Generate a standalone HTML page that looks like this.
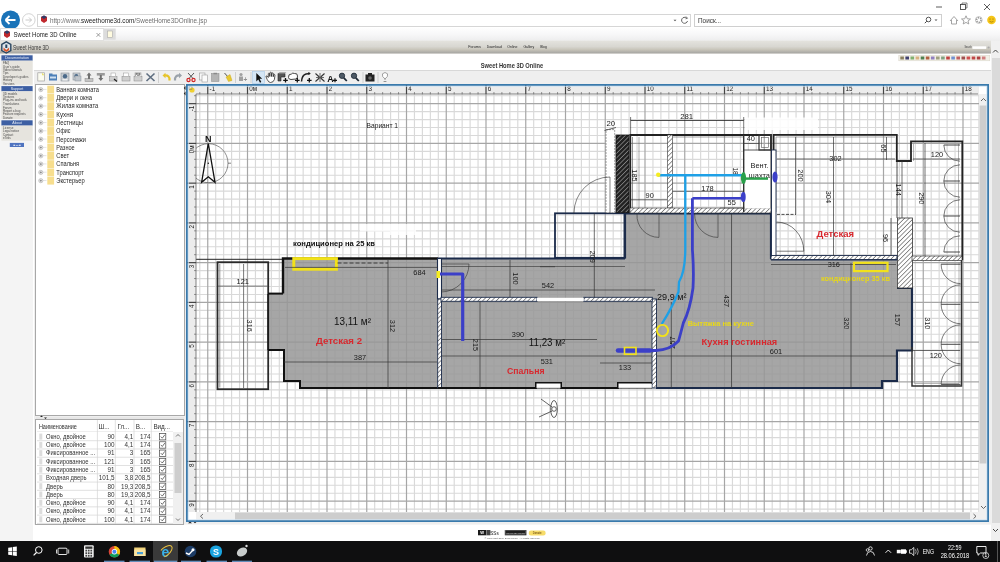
<!DOCTYPE html>
<html><head><meta charset="utf-8"><style>
*{margin:0;padding:0;box-sizing:border-box}
html,body{width:1000px;height:562px;overflow:hidden;background:#fff;font-family:"Liberation Sans",sans-serif;}
.a{position:absolute}
</style></head>
<body>
<svg class="a" style="left:0;top:0;will-change:transform" width="1000" height="562" viewBox="0 0 1000 562" font-family='"Liberation Sans", sans-serif'>
<rect x="37.5" y="14.5" width="653" height="12" fill="#fff" stroke="#d6d6d6" stroke-width="1" />
<circle cx="10.5" cy="20" r="9.5" fill="#1a73b8"/>
<path d="M5.5,20 L15.5,20 M5.5,20 L9.5,16 M5.5,20 L9.5,24" fill="none" stroke="#fff" stroke-width="1.8" />
<circle cx="28.8" cy="20" r="6.3" fill="#fff" stroke="#c8c8c8" stroke-width="0.8"/>
<path d="M25.5,20 L31.5,20 M29,17.5 L31.5,20 L29,22.5" fill="none" stroke="#bdbdbd" stroke-width="0.8" />
<polygon points="41,17 44,15.5 47,17 47,21 44,23 41,21" fill="#c0282d" stroke="none" stroke-width="1" />
<polygon points="41,17 44,15.5 47,17 44,19" fill="#2b3d6b" stroke="none" stroke-width="1" />
<text x="50" y="22.8" font-size="7.2" fill="#6d6d6d" textLength="157" lengthAdjust="spacingAndGlyphs">http://www.<tspan fill="#222">sweethome3d.com</tspan>/SweetHome3DOnline.jsp</text>
<path d="M673.5,19.8 L676.5,19.8 L675,21.3 Z" fill="#555" stroke="none" stroke-width="1" />
<path d="M686.5,18 A3,3 0 1 0 687.5,21" fill="none" stroke="#555" stroke-width="0.9" />
<path d="M686,16.5 L687.5,18.3 L685.5,18.8" fill="none" stroke="#555" stroke-width="0.8" />
<rect x="694.5" y="14.5" width="247" height="12" fill="#fff" stroke="#cfcfcf" stroke-width="1" />
<text x="698" y="22.8" font-size="7" fill="#333" font-weight="normal" text-anchor="start"  textLength="23" lengthAdjust="spacingAndGlyphs">Поиск...</text>
<circle cx="928.5" cy="19.5" r="2.3" fill="none" stroke="#444" stroke-width="0.9"/>
<line x1="926.8" y1="21.2" x2="924.8" y2="23.2" stroke="#444" stroke-width="1" />
<path d="M934.5,19.5 L937.5,19.5 L936,21 Z" fill="#555" stroke="none" stroke-width="1" />
<path d="M950,21 L954,16.5 L958,21 M951.5,20 L951.5,24 L956.5,24 L956.5,20" fill="none" stroke="#9a9a9a" stroke-width="0.9" />
<path d="M966,15.8 L967.3,18.8 L970.5,19 L968,21 L968.8,24 L966,22.4 L963.2,24 L964,21 L961.5,19 L964.7,18.8 Z" fill="none" stroke="#9a9a9a" stroke-width="0.9" />
<circle cx="978.8" cy="20" r="2.2" fill="none" stroke="#9a9a9a" stroke-width="1.6" stroke-dasharray="1.2 0.9"/>
<circle cx="978.8" cy="20" r="3.4" fill="none" stroke="#9a9a9a" stroke-width="0.6"/>
<circle cx="991.5" cy="20" r="4.3" fill="#f5c518"/>
<circle cx="990" cy="19" r="0.5" fill="#7a5a00"/><circle cx="993" cy="19" r="0.5" fill="#7a5a00"/>
<path d="M989.5,21.3 Q991.5,22.8 993.5,21.3" fill="none" stroke="#7a5a00" stroke-width="0.5" />
<line x1="936" y1="7" x2="942" y2="7" stroke="#333" stroke-width="0.8" />
<rect x="960.5" y="4.5" width="5" height="5" fill="none" stroke="#333" stroke-width="0.8" />
<path d="M962,4.5 L962,3 L967,3 L967,8 L965.5,8" fill="none" stroke="#333" stroke-width="0.6" />
<path d="M984,4 L990,10 M990,4 L984,10" fill="none" stroke="#333" stroke-width="0.8" />
<defs><linearGradient id="tg" x1="0" y1="0" x2="0" y2="1"><stop offset="0" stop-color="#fefefe"/><stop offset="0.5" stop-color="#f7f7f8"/><stop offset="1" stop-color="#ededed"/></linearGradient></defs>
<rect x="0" y="28" width="1000" height="13" fill="url(#tg)" stroke="none" stroke-width="1" />
<rect x="0.5" y="28.5" width="103" height="12" fill="#fff" stroke="#e0e0e0" stroke-width="1" />
<polygon points="4,32 7,30.5 10,32 10,36 7,38 4,36" fill="#c0282d" stroke="none" stroke-width="1" />
<polygon points="4,32 7,30.5 10,32 7,34" fill="#2b3d6b" stroke="none" stroke-width="1" />
<text x="13.6" y="37.3" font-size="7" fill="#222" font-weight="normal" text-anchor="start"  textLength="63" lengthAdjust="spacingAndGlyphs">Sweet Home 3D Online</text>
<path d="M96.5,33 L100.3,36.8 M100.3,33 L96.5,36.8" fill="none" stroke="#777" stroke-width="0.7" />
<rect x="104" y="28.5" width="11.7" height="11.2" fill="#dcdcdc" stroke="none" stroke-width="1" />
<rect x="107.5" y="31" width="5" height="6.5" fill="#fffbe0" stroke="#aaa" stroke-width="0.6" />
<defs><linearGradient id="hg" x1="0" y1="0" x2="0" y2="1"><stop offset="0" stop-color="#e4e3de"/><stop offset="0.45" stop-color="#d8d7d1"/><stop offset="0.68" stop-color="#c8c5ba"/><stop offset="0.93" stop-color="#aaa9a5"/><stop offset="1" stop-color="#bdbbb6"/></linearGradient></defs>
<rect x="0" y="40.7" width="991" height="13" fill="url(#hg)" stroke="none" stroke-width="1" />
<polygon points="1.8,44.3 6.3,41.8 10.8,44.3 10.8,50.5 6.3,53 1.8,50.5" fill="#dfe6ec" stroke="#2a4660" stroke-width="1.4" />
<polygon points="3.5,47.5 6.3,50 9.1,47.5 9.1,50.3 6.3,52 3.5,50.3" fill="#d8562a" stroke="none" stroke-width="1" />
<rect x="5.3" y="44.5" width="2" height="3.5" fill="#2a4660" stroke="none" stroke-width="1" />
<text x="13" y="49.6" font-size="6.6" fill="#3a3a3a" font-weight="normal" text-anchor="start"  textLength="35.8" lengthAdjust="spacingAndGlyphs">Sweet Home 3D</text>
<text x="468.2" y="48.3" font-size="3.6" fill="#222" font-weight="normal" text-anchor="start"  textLength="12.6" lengthAdjust="spacingAndGlyphs">Forums</text>
<text x="486.8" y="48.3" font-size="3.6" fill="#222" font-weight="normal" text-anchor="start"  textLength="15" lengthAdjust="spacingAndGlyphs">Download</text>
<text x="507.2" y="48.3" font-size="3.6" fill="#222" font-weight="normal" text-anchor="start"  textLength="10.2" lengthAdjust="spacingAndGlyphs">Online</text>
<text x="523.4" y="48.3" font-size="3.6" fill="#222" font-weight="normal" text-anchor="start"  textLength="10.8" lengthAdjust="spacingAndGlyphs">Gallery</text>
<text x="540.2" y="48.3" font-size="3.6" fill="#222" font-weight="normal" text-anchor="start"  textLength="6.6" lengthAdjust="spacingAndGlyphs">Blog</text>
<rect x="972.4" y="46.3" width="13.8" height="2.6" fill="#fff" stroke="none" stroke-width="1" />
<text x="964.6" y="48.3" font-size="2.6" fill="#333" font-weight="normal" text-anchor="start"  textLength="7.2" lengthAdjust="spacingAndGlyphs">Search</text>
<circle cx="988.6" cy="47.5" r="1.1" fill="#aaa"/>
<rect x="991" y="41" width="9" height="500" fill="#f0f0f0" stroke="none" stroke-width="1" />
<rect x="992" y="58" width="8" height="465" fill="#dadada" stroke="none" stroke-width="1" />
<path d="M993,52.5 L995.5,50 L998,52.5" fill="none" stroke="#444" stroke-width="1" />
<path d="M993,529 L995.5,531.5 L998,529" fill="none" stroke="#444" stroke-width="1" />
<rect x="0" y="54" width="33" height="487" fill="#f4f4f4" stroke="none" stroke-width="1" />
<rect x="1.4" y="55.3" width="31.2" height="5.400000000000006" fill="#3d5fa3" stroke="none" stroke-width="1" />
<text x="17" y="59.400000000000006" font-size="3.6" fill="#e8eef8" font-weight="normal" text-anchor="middle" >Documentation</text>
<rect x="1.4" y="60.7" width="31.2" height="24.0" fill="#e6e4de" stroke="none" stroke-width="1" />
<text x="3" y="64" font-size="3.0" fill="#4a4a4a" font-weight="normal" text-anchor="start" >FAQ</text>
<text x="3" y="67.9" font-size="3.0" fill="#4a4a4a" font-weight="normal" text-anchor="start" >User's guide</text>
<text x="3" y="70.6" font-size="3.0" fill="#4a4a4a" font-weight="normal" text-anchor="start" >Video tutorials</text>
<text x="3" y="74.1" font-size="3.0" fill="#4a4a4a" font-weight="normal" text-anchor="start" >Tips</text>
<text x="3" y="78" font-size="3.0" fill="#4a4a4a" font-weight="normal" text-anchor="start" >Developer's guides</text>
<text x="3" y="81.2" font-size="3.0" fill="#4a4a4a" font-weight="normal" text-anchor="start" >History</text>
<text x="3" y="84.5" font-size="3.0" fill="#4a4a4a" font-weight="normal" text-anchor="start" >Versions</text>
<rect x="1.4" y="86.1" width="31.2" height="5.200000000000003" fill="#3d5fa3" stroke="none" stroke-width="1" />
<text x="17" y="90.0" font-size="3.6" fill="#e8eef8" font-weight="normal" text-anchor="middle" >Support</text>
<rect x="1.4" y="91.3" width="31.2" height="27.700000000000003" fill="#e6e4de" stroke="none" stroke-width="1" />
<text x="3" y="94.6" font-size="3.0" fill="#4a4a4a" font-weight="normal" text-anchor="start" >3D models</text>
<text x="3" y="97.6" font-size="3.0" fill="#4a4a4a" font-weight="normal" text-anchor="start" >Textures</text>
<text x="3" y="101.4" font-size="3.0" fill="#4a4a4a" font-weight="normal" text-anchor="start" >Plug-ins and tools</text>
<text x="3" y="104.7" font-size="3.0" fill="#4a4a4a" font-weight="normal" text-anchor="start" >Translations</text>
<text x="3" y="108.5" font-size="3.0" fill="#4a4a4a" font-weight="normal" text-anchor="start" >Forum</text>
<text x="3" y="112" font-size="3.0" fill="#4a4a4a" font-weight="normal" text-anchor="start" >Report a bug</text>
<text x="3" y="115.4" font-size="3.0" fill="#4a4a4a" font-weight="normal" text-anchor="start" >Feature requests</text>
<text x="3" y="118.6" font-size="3.0" fill="#4a4a4a" font-weight="normal" text-anchor="start" >Donate</text>
<rect x="1.4" y="120.3" width="31.2" height="5.299999999999997" fill="#3d5fa3" stroke="none" stroke-width="1" />
<text x="17" y="124.3" font-size="3.6" fill="#e8eef8" font-weight="normal" text-anchor="middle" >About</text>
<rect x="1.4" y="125.6" width="31.2" height="15.099999999999994" fill="#e6e4de" stroke="none" stroke-width="1" />
<text x="3" y="128.8" font-size="3.0" fill="#4a4a4a" font-weight="normal" text-anchor="start" >License</text>
<text x="3" y="132.1" font-size="3.0" fill="#4a4a4a" font-weight="normal" text-anchor="start" >Legal notice</text>
<text x="3" y="135.7" font-size="3.0" fill="#4a4a4a" font-weight="normal" text-anchor="start" >Contact</text>
<text x="3" y="139" font-size="3.0" fill="#4a4a4a" font-weight="normal" text-anchor="start" >eTeks</text>
<rect x="9.8" y="142.9" width="14.2" height="4.1" fill="#4f74c0" stroke="none" stroke-width="1" />
<text x="17" y="146" font-size="2.4" fill="#fff" font-weight="normal" text-anchor="middle" >■ Tw ■</text>
<text x="512" y="68.3" font-size="6.9" fill="#333" font-weight="bold" text-anchor="middle"  textLength="62.4" lengthAdjust="spacingAndGlyphs">Sweet Home 3D Online</text>
<rect x="898.8" y="55.3" width="91" height="5.5" fill="#f2efe6" stroke="#d8d4c8" stroke-width="0.5" />
<rect x="900.3" y="56.5" width="3.6" height="3" fill="#8a8060" stroke="none" stroke-width="1" />
<rect x="905.4" y="56.5" width="3.6" height="3" fill="#404070" stroke="none" stroke-width="1" />
<rect x="910.5" y="56.5" width="3.6" height="3" fill="#80b070" stroke="none" stroke-width="1" />
<rect x="915.5999999999999" y="56.5" width="3.6" height="3" fill="#d8b080" stroke="none" stroke-width="1" />
<rect x="920.6999999999999" y="56.5" width="3.6" height="3" fill="#508050" stroke="none" stroke-width="1" />
<rect x="925.8" y="56.5" width="3.6" height="3" fill="#b06040" stroke="none" stroke-width="1" />
<rect x="930.9" y="56.5" width="3.6" height="3" fill="#9080c0" stroke="none" stroke-width="1" />
<rect x="936.0" y="56.5" width="3.6" height="3" fill="#a0a080" stroke="none" stroke-width="1" />
<rect x="941.0999999999999" y="56.5" width="3.6" height="3" fill="#80a080" stroke="none" stroke-width="1" />
<rect x="946.1999999999999" y="56.5" width="3.6" height="3" fill="#c04040" stroke="none" stroke-width="1" />
<rect x="951.3" y="56.5" width="3.6" height="3" fill="#7090d0" stroke="none" stroke-width="1" />
<rect x="956.4" y="56.5" width="3.6" height="3" fill="#c06060" stroke="none" stroke-width="1" />
<rect x="961.5" y="56.5" width="3.6" height="3" fill="#a05050" stroke="none" stroke-width="1" />
<rect x="966.5999999999999" y="56.5" width="3.6" height="3" fill="#d05050" stroke="none" stroke-width="1" />
<rect x="971.6999999999999" y="56.5" width="3.6" height="3" fill="#c04848" stroke="none" stroke-width="1" />
<rect x="976.8" y="56.5" width="3.6" height="3" fill="#b04040" stroke="none" stroke-width="1" />
<rect x="981.9" y="56.5" width="3.6" height="3" fill="#d08080" stroke="none" stroke-width="1" />
<rect x="34" y="70" width="957" height="454.6" fill="#efefef" stroke="none" stroke-width="1" />
<line x1="34" y1="70.5" x2="991" y2="70.5" stroke="#d8d8d8" stroke-width="1" />
<rect x="37.8" y="72.8" width="6.8" height="8.2" fill="#fbfbef" stroke="#a0a0a0" stroke-width="0.7" />
<polygon points="42,72.8 44.6,75.3 42,75.3" fill="#e8e070" stroke="none" stroke-width="1" />
<rect x="49" y="74.5" width="8" height="6" fill="#4d7fb8" stroke="none" stroke-width="1" />
<rect x="49" y="73.5" width="3.5" height="1.5" fill="#4d7fb8" stroke="none" stroke-width="1" />
<rect x="50" y="76.5" width="6" height="2" fill="#cfe0f0" stroke="none" stroke-width="1" />
<rect x="61" y="73" width="8" height="8" fill="#c8cdd2" stroke="#8a929a" stroke-width="0.6" />
<circle cx="65" cy="76.3" r="2.2" fill="#4b6a8a"/>
<rect x="62.5" y="79" width="5" height="1.5" fill="#eee" stroke="none" stroke-width="1" />
<rect x="73" y="73" width="7" height="7" fill="#c8cdd2" stroke="#8a929a" stroke-width="0.6" />
<circle cx="76.3" cy="76" r="2" fill="#4b6a8a"/>
<rect x="75" y="76" width="6" height="5" fill="#bfc5cb" stroke="#8a929a" stroke-width="0.5" />
<rect x="85" y="78.5" width="8" height="3" fill="#c4c4c4" stroke="#8a8a8a" stroke-width="0.5" />
<polygon points="89,72.5 91.5,75.5 90,75.5 90,79 88,79 88,75.5 86.5,75.5" fill="#707070" stroke="none" stroke-width="1" />
<rect x="96.8" y="73" width="8" height="2.6" fill="#9a9a9a" stroke="none" stroke-width="1" />
<polygon points="100.8,81 103.3,78 101.8,78 101.8,75 99.8,75 99.8,78 98.3,78" fill="#707070" stroke="none" stroke-width="1" />
<rect x="109.5" y="76.5" width="7.5" height="4.5" fill="#cfcfcf" stroke="#888" stroke-width="0.5" />
<rect x="111" y="73" width="4.5" height="3.5" fill="#fff" stroke="#999" stroke-width="0.5" />
<path d="M114,79 L117,81.5" fill="none" stroke="#222" stroke-width="1.2" />
<rect x="122" y="76.5" width="8" height="4.5" fill="#cfcfcf" stroke="#888" stroke-width="0.5" />
<rect x="123.5" y="73" width="5" height="3.5" fill="#fff" stroke="#999" stroke-width="0.5" />
<rect x="134" y="76.5" width="8" height="4.5" fill="#cfcfcf" stroke="#888" stroke-width="0.5" />
<rect x="135" y="72.8" width="6" height="4" fill="#fff" stroke="#999" stroke-width="0.5" />
<text x="138" y="76.3" font-size="2.6" fill="#333" font-weight="bold" text-anchor="middle" >PDF</text>
<path d="M146.5,73.5 L154.5,81 M154.5,73.5 L146.5,81" fill="none" stroke="#5f6e80" stroke-width="1.6" />
<line x1="158.5" y1="72" x2="158.5" y2="83" stroke="#c8c8c8" stroke-width="0.8" />
<path d="M169.5,80.5 Q170,75 164.5,75.5" fill="none" stroke="#e6c42a" stroke-width="2.2" />
<polygon points="162.5,75.5 165.5,72.8 165.5,78.2" fill="#e6c42a" stroke="none" stroke-width="1" />
<path d="M175,80.5 Q174.5,75 180,75.5" fill="none" stroke="#9aa2aa" stroke-width="2.2" />
<polygon points="182,75.5 179,72.8 179,78.2" fill="#9aa2aa" stroke="none" stroke-width="1" />
<path d="M188,73 L193.5,79 M194,73 L188.5,79" fill="none" stroke="#444" stroke-width="0.9" />
<circle cx="188.5" cy="80" r="1.6" fill="none" stroke="#d02828" stroke-width="1.2"/><circle cx="193.5" cy="80" r="1.6" fill="none" stroke="#d02828" stroke-width="1.2"/>
<rect x="199.5" y="73" width="5.5" height="7" fill="#f8f8f8" stroke="#9a9a9a" stroke-width="0.6" />
<rect x="202" y="75" width="5.5" height="7" fill="#fbfbfb" stroke="#9a9a9a" stroke-width="0.6" />
<rect x="211.5" y="73.5" width="7.5" height="8" fill="#b4b4b4" stroke="#8a8a8a" stroke-width="0.5" />
<rect x="213.5" y="72.8" width="3.5" height="1.5" fill="#8a8a8a" stroke="none" stroke-width="1" />
<path d="M224.5,73 L229,78" fill="none" stroke="#555" stroke-width="1" />
<polygon points="226,77 230,74.5 232,80.5 228.5,81.5" fill="#e8c830" stroke="#c0a010" stroke-width="0.4" />
<line x1="235.5" y1="72" x2="235.5" y2="83" stroke="#c8c8c8" stroke-width="0.8" />
<circle cx="241" cy="74.5" r="1.6" fill="#a0a0a0"/>
<rect x="239" y="76.5" width="4" height="4.5" fill="#a0a0a0" stroke="none" stroke-width="1" />
<text x="245.3" y="81.5" font-size="6.5" fill="#909090" font-weight="bold" text-anchor="middle" >+</text>
<line x1="251" y1="72" x2="251" y2="83" stroke="#c8c8c8" stroke-width="0.8" />
<rect x="252.5" y="71.5" width="12" height="12" fill="#d5e6f5" stroke="#a9c8e6" stroke-width="0.6" />
<polygon points="256.3,73 256.3,81.5 258.3,79.5 260,82.7 261.3,82 259.6,78.8 262.2,78.8" fill="#111" stroke="none" stroke-width="1" />
<path d="M267.2,79.5 L266,76.8 Q265.8,75.6 267,76 L268.3,77.5 L268.3,73.6 Q268.8,72.7 269.6,73.4 L269.8,76.5 L270,72.6 Q270.7,71.8 271.4,72.6 L271.5,76.5 L272,73.2 Q272.7,72.5 273.3,73.3 L273.2,76.8 L273.8,74.6 Q274.6,74.1 275,74.9 L274.4,79.5 Q273.5,82.5 270.5,82.5 Q268.5,82.5 267.2,79.5 Z" fill="#fff" stroke="#222" stroke-width="0.75" />
<polygon points="278,81 278,73.5 285,73.5 285,77 281,77 281,81" fill="#555" stroke="#222" stroke-width="0.6" />
<polygon points="278,73.5 279.5,72.3 286.3,72.3 285,73.5" fill="#999" stroke="none" stroke-width="1" />
<path d="M283.2,80.3 L287.8,80.3 M285.5,78.0 L285.5,82.6" fill="none" stroke="#111" stroke-width="1.3" />
<path d="M288.5,77.5 Q288,74 291.5,74 Q292.5,72.5 294.5,73.5 Q297.5,73 297.5,76 Q298,78.5 295.5,79 L291,79.5 Q288.8,79.5 288.5,77.5 Z" fill="#fff" stroke="#333" stroke-width="0.9" />
<path d="M295.0,80.3 L299.6,80.3 M297.3,78.0 L297.3,82.6" fill="none" stroke="#111" stroke-width="1.3" />
<path d="M301.5,81.5 Q302,75 306,74 L310,73.5" fill="none" stroke="#222" stroke-width="1.5" />
<polygon points="310.8,73.5 308.3,72 308.3,75" fill="#222" stroke="none" stroke-width="1" />
<path d="M307.0,80.3 L311.6,80.3 M309.3,78.0 L309.3,82.6" fill="none" stroke="#111" stroke-width="1.3" />
<path d="M315.5,73.5 L319.3,77 M324.5,73.5 L320.7,77 M315.5,81.5 L319.3,78 M324.5,81.5 L320.7,78" fill="none" stroke="#333" stroke-width="1.1" />
<path d="M316,77.5 L324,77.5 M320,73 L320,82" fill="none" stroke="#333" stroke-width="0.7" />
<text x="330.5" y="81.5" font-size="8.8" fill="#111" font-weight="bold" text-anchor="middle" >A</text>
<path d="M333,80.3 L337,80.3 M335,78.3 L335,82.3" fill="none" stroke="#111" stroke-width="1.2" />
<circle cx="342" cy="75.8" r="2.7" fill="#4e5a66" stroke="#1e2a36" stroke-width="0.8"/>
<line x1="343.8" y1="77.8" x2="346.8" y2="81" stroke="#1e2a36" stroke-width="1.8" />
<circle cx="354" cy="75.8" r="2.7" fill="#4e5a66" stroke="#1e2a36" stroke-width="0.8"/>
<line x1="355.8" y1="77.8" x2="358.8" y2="81" stroke="#1e2a36" stroke-width="1.8" />
<line x1="363" y1="72" x2="363" y2="83" stroke="#c8c8c8" stroke-width="0.8" />
<rect x="365.5" y="74.5" width="9" height="7" fill="#222" stroke="none" stroke-width="1" />
<rect x="368" y="73" width="4" height="2" fill="#222" stroke="none" stroke-width="1" />
<circle cx="370" cy="78" r="1.8" fill="#666"/>
<line x1="378" y1="72" x2="378" y2="83" stroke="#c8c8c8" stroke-width="0.8" />
<path d="M385,80 L385,79 Q381.5,76.5 382.5,73.8 Q385,71.2 387.5,73.8 Q388.5,76.5 385,79" fill="#fff" stroke="#888" stroke-width="0.8" />
<line x1="383.6" y1="81.5" x2="386.4" y2="81.5" stroke="#888" stroke-width="0.9" />
<rect x="35.5" y="84.5" width="149" height="331" fill="#fff" stroke="#a8a8a8" stroke-width="1" />
<circle cx="40.8" cy="89.6" r="2.1" fill="#f0f0f0" stroke="#9a9a9a" stroke-width="0.5"/>
<line x1="39.7" y1="89.6" x2="41.9" y2="89.6" stroke="#555" stroke-width="0.5" />
<line x1="40.8" y1="88.5" x2="40.8" y2="90.69999999999999" stroke="#555" stroke-width="0.5" />
<line x1="43" y1="89.39999999999999" x2="46.5" y2="89.39999999999999" stroke="#c8c8c8" stroke-width="0.5" />
<rect x="47.3" y="85.69999999999999" width="6.8" height="7.8" fill="#f7de8e" stroke="none" stroke-width="1" />
<text x="56.3" y="91.89999999999999" font-size="6.6" fill="#2a2a2a" font-weight="normal" text-anchor="start"  textLength="42.7" lengthAdjust="spacingAndGlyphs">Ванная комната</text>
<circle cx="40.8" cy="97.88" r="2.1" fill="#f0f0f0" stroke="#9a9a9a" stroke-width="0.5"/>
<line x1="39.7" y1="97.88" x2="41.9" y2="97.88" stroke="#555" stroke-width="0.5" />
<line x1="40.8" y1="96.78" x2="40.8" y2="98.97999999999999" stroke="#555" stroke-width="0.5" />
<line x1="43" y1="97.67999999999999" x2="46.5" y2="97.67999999999999" stroke="#c8c8c8" stroke-width="0.5" />
<rect x="47.3" y="93.97999999999999" width="6.8" height="7.8" fill="#f7de8e" stroke="none" stroke-width="1" />
<text x="56.3" y="100.17999999999999" font-size="6.6" fill="#2a2a2a" font-weight="normal" text-anchor="start"  textLength="35.7" lengthAdjust="spacingAndGlyphs">Двери и окна</text>
<circle cx="40.8" cy="106.16" r="2.1" fill="#f0f0f0" stroke="#9a9a9a" stroke-width="0.5"/>
<line x1="39.7" y1="106.16" x2="41.9" y2="106.16" stroke="#555" stroke-width="0.5" />
<line x1="40.8" y1="105.06" x2="40.8" y2="107.25999999999999" stroke="#555" stroke-width="0.5" />
<line x1="43" y1="105.96" x2="46.5" y2="105.96" stroke="#c8c8c8" stroke-width="0.5" />
<rect x="47.3" y="102.25999999999999" width="6.8" height="7.8" fill="#f7de8e" stroke="none" stroke-width="1" />
<text x="56.3" y="108.46" font-size="6.6" fill="#2a2a2a" font-weight="normal" text-anchor="start"  textLength="41.9" lengthAdjust="spacingAndGlyphs">Жилая комната</text>
<circle cx="40.8" cy="114.44" r="2.1" fill="#f0f0f0" stroke="#9a9a9a" stroke-width="0.5"/>
<line x1="39.7" y1="114.44" x2="41.9" y2="114.44" stroke="#555" stroke-width="0.5" />
<line x1="40.8" y1="113.34" x2="40.8" y2="115.53999999999999" stroke="#555" stroke-width="0.5" />
<line x1="43" y1="114.24" x2="46.5" y2="114.24" stroke="#c8c8c8" stroke-width="0.5" />
<rect x="47.3" y="110.53999999999999" width="6.8" height="7.8" fill="#f7de8e" stroke="none" stroke-width="1" />
<text x="56.3" y="116.74" font-size="6.6" fill="#2a2a2a" font-weight="normal" text-anchor="start"  textLength="16.8" lengthAdjust="spacingAndGlyphs">Кухня</text>
<circle cx="40.8" cy="122.72" r="2.1" fill="#f0f0f0" stroke="#9a9a9a" stroke-width="0.5"/>
<line x1="39.7" y1="122.72" x2="41.9" y2="122.72" stroke="#555" stroke-width="0.5" />
<line x1="40.8" y1="121.62" x2="40.8" y2="123.82" stroke="#555" stroke-width="0.5" />
<line x1="43" y1="122.52" x2="46.5" y2="122.52" stroke="#c8c8c8" stroke-width="0.5" />
<rect x="47.3" y="118.82" width="6.8" height="7.8" fill="#f7de8e" stroke="none" stroke-width="1" />
<text x="56.3" y="125.02" font-size="6.6" fill="#2a2a2a" font-weight="normal" text-anchor="start"  textLength="26.7" lengthAdjust="spacingAndGlyphs">Лестницы</text>
<circle cx="40.8" cy="131.0" r="2.1" fill="#f0f0f0" stroke="#9a9a9a" stroke-width="0.5"/>
<line x1="39.7" y1="131.0" x2="41.9" y2="131.0" stroke="#555" stroke-width="0.5" />
<line x1="40.8" y1="129.9" x2="40.8" y2="132.1" stroke="#555" stroke-width="0.5" />
<line x1="43" y1="130.8" x2="46.5" y2="130.8" stroke="#c8c8c8" stroke-width="0.5" />
<rect x="47.3" y="127.1" width="6.8" height="7.8" fill="#f7de8e" stroke="none" stroke-width="1" />
<text x="56.3" y="133.3" font-size="6.6" fill="#2a2a2a" font-weight="normal" text-anchor="start"  textLength="14.2" lengthAdjust="spacingAndGlyphs">Офис</text>
<circle cx="40.8" cy="139.27999999999997" r="2.1" fill="#f0f0f0" stroke="#9a9a9a" stroke-width="0.5"/>
<line x1="39.7" y1="139.27999999999997" x2="41.9" y2="139.27999999999997" stroke="#555" stroke-width="0.5" />
<line x1="40.8" y1="138.17999999999998" x2="40.8" y2="140.37999999999997" stroke="#555" stroke-width="0.5" />
<line x1="43" y1="139.07999999999998" x2="46.5" y2="139.07999999999998" stroke="#c8c8c8" stroke-width="0.5" />
<rect x="47.3" y="135.37999999999997" width="6.8" height="7.8" fill="#f7de8e" stroke="none" stroke-width="1" />
<text x="56.3" y="141.57999999999998" font-size="6.6" fill="#2a2a2a" font-weight="normal" text-anchor="start"  textLength="29.6" lengthAdjust="spacingAndGlyphs">Персонажи</text>
<circle cx="40.8" cy="147.56" r="2.1" fill="#f0f0f0" stroke="#9a9a9a" stroke-width="0.5"/>
<line x1="39.7" y1="147.56" x2="41.9" y2="147.56" stroke="#555" stroke-width="0.5" />
<line x1="40.8" y1="146.46" x2="40.8" y2="148.66" stroke="#555" stroke-width="0.5" />
<line x1="43" y1="147.36" x2="46.5" y2="147.36" stroke="#c8c8c8" stroke-width="0.5" />
<rect x="47.3" y="143.66" width="6.8" height="7.8" fill="#f7de8e" stroke="none" stroke-width="1" />
<text x="56.3" y="149.86" font-size="6.6" fill="#2a2a2a" font-weight="normal" text-anchor="start"  textLength="18.4" lengthAdjust="spacingAndGlyphs">Разное</text>
<circle cx="40.8" cy="155.83999999999997" r="2.1" fill="#f0f0f0" stroke="#9a9a9a" stroke-width="0.5"/>
<line x1="39.7" y1="155.83999999999997" x2="41.9" y2="155.83999999999997" stroke="#555" stroke-width="0.5" />
<line x1="40.8" y1="154.73999999999998" x2="40.8" y2="156.93999999999997" stroke="#555" stroke-width="0.5" />
<line x1="43" y1="155.64" x2="46.5" y2="155.64" stroke="#c8c8c8" stroke-width="0.5" />
<rect x="47.3" y="151.93999999999997" width="6.8" height="7.8" fill="#f7de8e" stroke="none" stroke-width="1" />
<text x="56.3" y="158.14" font-size="6.6" fill="#2a2a2a" font-weight="normal" text-anchor="start"  textLength="12.9" lengthAdjust="spacingAndGlyphs">Свет</text>
<circle cx="40.8" cy="164.12" r="2.1" fill="#f0f0f0" stroke="#9a9a9a" stroke-width="0.5"/>
<line x1="39.7" y1="164.12" x2="41.9" y2="164.12" stroke="#555" stroke-width="0.5" />
<line x1="40.8" y1="163.02" x2="40.8" y2="165.22" stroke="#555" stroke-width="0.5" />
<line x1="43" y1="163.92000000000002" x2="46.5" y2="163.92000000000002" stroke="#c8c8c8" stroke-width="0.5" />
<rect x="47.3" y="160.22" width="6.8" height="7.8" fill="#f7de8e" stroke="none" stroke-width="1" />
<text x="56.3" y="166.42000000000002" font-size="6.6" fill="#2a2a2a" font-weight="normal" text-anchor="start"  textLength="22.9" lengthAdjust="spacingAndGlyphs">Спальня</text>
<circle cx="40.8" cy="172.39999999999998" r="2.1" fill="#f0f0f0" stroke="#9a9a9a" stroke-width="0.5"/>
<line x1="39.7" y1="172.39999999999998" x2="41.9" y2="172.39999999999998" stroke="#555" stroke-width="0.5" />
<line x1="40.8" y1="171.29999999999998" x2="40.8" y2="173.49999999999997" stroke="#555" stroke-width="0.5" />
<line x1="43" y1="172.2" x2="46.5" y2="172.2" stroke="#c8c8c8" stroke-width="0.5" />
<rect x="47.3" y="168.49999999999997" width="6.8" height="7.8" fill="#f7de8e" stroke="none" stroke-width="1" />
<text x="56.3" y="174.7" font-size="6.6" fill="#2a2a2a" font-weight="normal" text-anchor="start"  textLength="27.6" lengthAdjust="spacingAndGlyphs">Транспорт</text>
<circle cx="40.8" cy="180.68" r="2.1" fill="#f0f0f0" stroke="#9a9a9a" stroke-width="0.5"/>
<line x1="39.7" y1="180.68" x2="41.9" y2="180.68" stroke="#555" stroke-width="0.5" />
<line x1="40.8" y1="179.58" x2="40.8" y2="181.78" stroke="#555" stroke-width="0.5" />
<line x1="43" y1="180.48000000000002" x2="46.5" y2="180.48000000000002" stroke="#c8c8c8" stroke-width="0.5" />
<rect x="47.3" y="176.78" width="6.8" height="7.8" fill="#f7de8e" stroke="none" stroke-width="1" />
<text x="56.3" y="182.98000000000002" font-size="6.6" fill="#2a2a2a" font-weight="normal" text-anchor="start"  textLength="28.4" lengthAdjust="spacingAndGlyphs">Экстерьер</text>
<line x1="36" y1="418" x2="184" y2="418" stroke="#ccc" stroke-width="0.5" />
<path d="M40,417 L41.5,415.5 L43,417 Z M44,417.5 L45.5,419 L47,417.5 Z" fill="#222" stroke="none" stroke-width="1" />
<rect x="35.5" y="419.5" width="148" height="105" fill="#fff" stroke="#a8a8a8" stroke-width="1" />
<rect x="37" y="420" width="136" height="12" fill="#fff" stroke="none" stroke-width="1" />
<line x1="37" y1="431.5" x2="173" y2="431.5" stroke="#e2e2e2" stroke-width="0.6" />
<line x1="97.4" y1="420" x2="97.4" y2="524" stroke="#d4d4d4" stroke-width="0.7" />
<line x1="115.3" y1="420" x2="115.3" y2="524" stroke="#d4d4d4" stroke-width="0.7" />
<line x1="134" y1="420" x2="134" y2="524" stroke="#d4d4d4" stroke-width="0.7" />
<line x1="151.3" y1="420" x2="151.3" y2="524" stroke="#d4d4d4" stroke-width="0.7" />
<text x="38.9" y="428.6" font-size="6.3" fill="#333" font-weight="normal" text-anchor="start"  textLength="38" lengthAdjust="spacingAndGlyphs">Наименование</text>
<text x="98.6" y="428.6" font-size="6.3" fill="#333" font-weight="normal" text-anchor="start" >Ш...</text>
<text x="117.4" y="428.6" font-size="6.3" fill="#333" font-weight="normal" text-anchor="start" >Гл...</text>
<text x="135.8" y="428.6" font-size="6.3" fill="#333" font-weight="normal" text-anchor="start" >В...</text>
<text x="153.4" y="428.6" font-size="6.3" fill="#333" font-weight="normal" text-anchor="start" >Вид...</text>
<line x1="37" y1="440.70000000000005" x2="173" y2="440.70000000000005" stroke="#d4d4d4" stroke-width="0.7" />
<rect x="39.3" y="433.6" width="3" height="6" fill="#dcdcdc" stroke="none" stroke-width="1" />
<text x="46.1" y="438.90000000000003" font-size="6.3" fill="#333" font-weight="normal" text-anchor="start"  textLength="39.8" lengthAdjust="spacingAndGlyphs">Окно, двойное</text>
<text x="114.6" y="438.90000000000003" font-size="6.3" fill="#333" font-weight="normal" text-anchor="end" >90</text>
<text x="133.3" y="438.90000000000003" font-size="6.3" fill="#333" font-weight="normal" text-anchor="end" >4,1</text>
<text x="150.6" y="438.90000000000003" font-size="6.3" fill="#333" font-weight="normal" text-anchor="end" >174</text>
<rect x="159.4" y="433.5" width="6.4" height="6.4" fill="#fff" stroke="#444" stroke-width="0.7" />
<path d="M160.8,436.6 L162.3,438.20000000000005 L164.8,434.8" fill="none" stroke="#333" stroke-width="0.7" />
<line x1="37" y1="448.97" x2="173" y2="448.97" stroke="#d4d4d4" stroke-width="0.7" />
<rect x="39.3" y="441.87" width="3" height="6" fill="#dcdcdc" stroke="none" stroke-width="1" />
<text x="46.1" y="447.17" font-size="6.3" fill="#333" font-weight="normal" text-anchor="start"  textLength="39.8" lengthAdjust="spacingAndGlyphs">Окно, двойное</text>
<text x="114.6" y="447.17" font-size="6.3" fill="#333" font-weight="normal" text-anchor="end" >100</text>
<text x="133.3" y="447.17" font-size="6.3" fill="#333" font-weight="normal" text-anchor="end" >4,1</text>
<text x="150.6" y="447.17" font-size="6.3" fill="#333" font-weight="normal" text-anchor="end" >174</text>
<rect x="159.4" y="441.77" width="6.4" height="6.4" fill="#fff" stroke="#444" stroke-width="0.7" />
<path d="M160.8,444.87 L162.3,446.47 L164.8,443.07" fill="none" stroke="#333" stroke-width="0.7" />
<line x1="37" y1="457.24000000000007" x2="173" y2="457.24000000000007" stroke="#d4d4d4" stroke-width="0.7" />
<rect x="39.3" y="450.14000000000004" width="3" height="6" fill="#dcdcdc" stroke="none" stroke-width="1" />
<text x="46.1" y="455.44000000000005" font-size="6.3" fill="#333" font-weight="normal" text-anchor="start"  textLength="49" lengthAdjust="spacingAndGlyphs">Фиксированное ...</text>
<text x="114.6" y="455.44000000000005" font-size="6.3" fill="#333" font-weight="normal" text-anchor="end" >91</text>
<text x="133.3" y="455.44000000000005" font-size="6.3" fill="#333" font-weight="normal" text-anchor="end" >3</text>
<text x="150.6" y="455.44000000000005" font-size="6.3" fill="#333" font-weight="normal" text-anchor="end" >165</text>
<rect x="159.4" y="450.04" width="6.4" height="6.4" fill="#fff" stroke="#444" stroke-width="0.7" />
<path d="M160.8,453.14000000000004 L162.3,454.74000000000007 L164.8,451.34000000000003" fill="none" stroke="#333" stroke-width="0.7" />
<line x1="37" y1="465.51000000000005" x2="173" y2="465.51000000000005" stroke="#d4d4d4" stroke-width="0.7" />
<rect x="39.3" y="458.41" width="3" height="6" fill="#dcdcdc" stroke="none" stroke-width="1" />
<text x="46.1" y="463.71000000000004" font-size="6.3" fill="#333" font-weight="normal" text-anchor="start"  textLength="49" lengthAdjust="spacingAndGlyphs">Фиксированное ...</text>
<text x="114.6" y="463.71000000000004" font-size="6.3" fill="#333" font-weight="normal" text-anchor="end" >121</text>
<text x="133.3" y="463.71000000000004" font-size="6.3" fill="#333" font-weight="normal" text-anchor="end" >3</text>
<text x="150.6" y="463.71000000000004" font-size="6.3" fill="#333" font-weight="normal" text-anchor="end" >165</text>
<rect x="159.4" y="458.31" width="6.4" height="6.4" fill="#fff" stroke="#444" stroke-width="0.7" />
<path d="M160.8,461.41 L162.3,463.01000000000005 L164.8,459.61" fill="none" stroke="#333" stroke-width="0.7" />
<line x1="37" y1="473.78000000000003" x2="173" y2="473.78000000000003" stroke="#d4d4d4" stroke-width="0.7" />
<rect x="39.3" y="466.68" width="3" height="6" fill="#dcdcdc" stroke="none" stroke-width="1" />
<text x="46.1" y="471.98" font-size="6.3" fill="#333" font-weight="normal" text-anchor="start"  textLength="49" lengthAdjust="spacingAndGlyphs">Фиксированное ...</text>
<text x="114.6" y="471.98" font-size="6.3" fill="#333" font-weight="normal" text-anchor="end" >91</text>
<text x="133.3" y="471.98" font-size="6.3" fill="#333" font-weight="normal" text-anchor="end" >3</text>
<text x="150.6" y="471.98" font-size="6.3" fill="#333" font-weight="normal" text-anchor="end" >165</text>
<rect x="159.4" y="466.58" width="6.4" height="6.4" fill="#fff" stroke="#444" stroke-width="0.7" />
<path d="M160.8,469.68 L162.3,471.28000000000003 L164.8,467.88" fill="none" stroke="#333" stroke-width="0.7" />
<line x1="37" y1="482.05000000000007" x2="173" y2="482.05000000000007" stroke="#d4d4d4" stroke-width="0.7" />
<rect x="39.3" y="474.95000000000005" width="3" height="6" fill="#dcdcdc" stroke="none" stroke-width="1" />
<text x="46.1" y="480.25000000000006" font-size="6.3" fill="#333" font-weight="normal" text-anchor="start"  textLength="40.4" lengthAdjust="spacingAndGlyphs">Входная дверь</text>
<text x="114.6" y="480.25000000000006" font-size="6.3" fill="#333" font-weight="normal" text-anchor="end" >101,5</text>
<text x="133.3" y="480.25000000000006" font-size="6.3" fill="#333" font-weight="normal" text-anchor="end" >3,8</text>
<text x="150.6" y="480.25000000000006" font-size="6.3" fill="#333" font-weight="normal" text-anchor="end" >208,5</text>
<rect x="159.4" y="474.85" width="6.4" height="6.4" fill="#fff" stroke="#444" stroke-width="0.7" />
<path d="M160.8,477.95000000000005 L162.3,479.55000000000007 L164.8,476.15000000000003" fill="none" stroke="#333" stroke-width="0.7" />
<line x1="37" y1="490.32000000000005" x2="173" y2="490.32000000000005" stroke="#d4d4d4" stroke-width="0.7" />
<rect x="39.3" y="483.22" width="3" height="6" fill="#dcdcdc" stroke="none" stroke-width="1" />
<text x="46.1" y="488.52000000000004" font-size="6.3" fill="#333" font-weight="normal" text-anchor="start"  textLength="16.7" lengthAdjust="spacingAndGlyphs">Дверь</text>
<text x="114.6" y="488.52000000000004" font-size="6.3" fill="#333" font-weight="normal" text-anchor="end" >80</text>
<text x="133.3" y="488.52000000000004" font-size="6.3" fill="#333" font-weight="normal" text-anchor="end" >19,3</text>
<text x="150.6" y="488.52000000000004" font-size="6.3" fill="#333" font-weight="normal" text-anchor="end" >208,5</text>
<rect x="159.4" y="483.12" width="6.4" height="6.4" fill="#fff" stroke="#444" stroke-width="0.7" />
<path d="M160.8,486.22 L162.3,487.82000000000005 L164.8,484.42" fill="none" stroke="#333" stroke-width="0.7" />
<line x1="37" y1="498.59000000000003" x2="173" y2="498.59000000000003" stroke="#d4d4d4" stroke-width="0.7" />
<rect x="39.3" y="491.49" width="3" height="6" fill="#dcdcdc" stroke="none" stroke-width="1" />
<text x="46.1" y="496.79" font-size="6.3" fill="#333" font-weight="normal" text-anchor="start"  textLength="16.7" lengthAdjust="spacingAndGlyphs">Дверь</text>
<text x="114.6" y="496.79" font-size="6.3" fill="#333" font-weight="normal" text-anchor="end" >80</text>
<text x="133.3" y="496.79" font-size="6.3" fill="#333" font-weight="normal" text-anchor="end" >19,3</text>
<text x="150.6" y="496.79" font-size="6.3" fill="#333" font-weight="normal" text-anchor="end" >208,5</text>
<rect x="159.4" y="491.39" width="6.4" height="6.4" fill="#fff" stroke="#444" stroke-width="0.7" />
<path d="M160.8,494.49 L162.3,496.09000000000003 L164.8,492.69" fill="none" stroke="#333" stroke-width="0.7" />
<line x1="37" y1="506.86" x2="173" y2="506.86" stroke="#d4d4d4" stroke-width="0.7" />
<rect x="39.3" y="499.76" width="3" height="6" fill="#dcdcdc" stroke="none" stroke-width="1" />
<text x="46.1" y="505.06" font-size="6.3" fill="#333" font-weight="normal" text-anchor="start"  textLength="39.8" lengthAdjust="spacingAndGlyphs">Окно, двойное</text>
<text x="114.6" y="505.06" font-size="6.3" fill="#333" font-weight="normal" text-anchor="end" >90</text>
<text x="133.3" y="505.06" font-size="6.3" fill="#333" font-weight="normal" text-anchor="end" >4,1</text>
<text x="150.6" y="505.06" font-size="6.3" fill="#333" font-weight="normal" text-anchor="end" >174</text>
<rect x="159.4" y="499.65999999999997" width="6.4" height="6.4" fill="#fff" stroke="#444" stroke-width="0.7" />
<path d="M160.8,502.76 L162.3,504.36 L164.8,500.96" fill="none" stroke="#333" stroke-width="0.7" />
<line x1="37" y1="515.13" x2="173" y2="515.13" stroke="#d4d4d4" stroke-width="0.7" />
<rect x="39.3" y="508.03000000000003" width="3" height="6" fill="#dcdcdc" stroke="none" stroke-width="1" />
<text x="46.1" y="513.33" font-size="6.3" fill="#333" font-weight="normal" text-anchor="start"  textLength="39.8" lengthAdjust="spacingAndGlyphs">Окно, двойное</text>
<text x="114.6" y="513.33" font-size="6.3" fill="#333" font-weight="normal" text-anchor="end" >90</text>
<text x="133.3" y="513.33" font-size="6.3" fill="#333" font-weight="normal" text-anchor="end" >4,1</text>
<text x="150.6" y="513.33" font-size="6.3" fill="#333" font-weight="normal" text-anchor="end" >174</text>
<rect x="159.4" y="507.93" width="6.4" height="6.4" fill="#fff" stroke="#444" stroke-width="0.7" />
<path d="M160.8,511.03000000000003 L162.3,512.63 L164.8,509.23" fill="none" stroke="#333" stroke-width="0.7" />
<line x1="37" y1="523.4" x2="173" y2="523.4" stroke="#d4d4d4" stroke-width="0.7" />
<rect x="39.3" y="516.3" width="3" height="6" fill="#dcdcdc" stroke="none" stroke-width="1" />
<text x="46.1" y="521.5999999999999" font-size="6.3" fill="#333" font-weight="normal" text-anchor="start"  textLength="39.8" lengthAdjust="spacingAndGlyphs">Окно, двойное</text>
<text x="114.6" y="521.5999999999999" font-size="6.3" fill="#333" font-weight="normal" text-anchor="end" >100</text>
<text x="133.3" y="521.5999999999999" font-size="6.3" fill="#333" font-weight="normal" text-anchor="end" >4,1</text>
<text x="150.6" y="521.5999999999999" font-size="6.3" fill="#333" font-weight="normal" text-anchor="end" >174</text>
<rect x="159.4" y="516.1999999999999" width="6.4" height="6.4" fill="#fff" stroke="#444" stroke-width="0.7" />
<path d="M160.8,519.3 L162.3,520.9 L164.8,517.5" fill="none" stroke="#333" stroke-width="0.7" />
<rect x="173" y="432" width="10" height="92" fill="#f0f0f0" stroke="none" stroke-width="1" />
<rect x="174.5" y="443" width="7" height="50" fill="#cdcdcd" stroke="none" stroke-width="1" />
<path d="M176,436.5 L178,434.5 L180,436.5" fill="none" stroke="#444" stroke-width="0.7" />
<path d="M176,518.5 L178,520.5 L180,518.5" fill="none" stroke="#444" stroke-width="0.7" />
<rect x="478" y="530" width="8.4" height="5.3" fill="#1a1a1a" stroke="none" stroke-width="1" />
<text x="482.2" y="534.3" font-size="4" fill="#fff" font-weight="bold" text-anchor="middle" >W</text>
<rect x="486.4" y="530" width="13.6" height="5.3" fill="#fff" stroke="none" stroke-width="1" />
<rect x="486.4" y="530" width="4" height="5.3" fill="#444" stroke="none" stroke-width="1" />
<text x="494.5" y="534.8" font-size="4.6" fill="#222" font-weight="normal" text-anchor="middle" >SSs</text>
<rect x="504.8" y="530" width="21.6" height="5.3" fill="#1e1e1e" stroke="none" stroke-width="1" />
<rect x="505.6" y="530.8" width="20" height="3.7" fill="none" stroke="#888" stroke-width="0.4" />
<text x="515.6" y="533.6" font-size="2.4" fill="#ccc" font-weight="normal" text-anchor="middle" >SOURCEFORGE</text>
<rect x="528.8" y="530.6" width="16.8" height="4.9" rx="2.2" fill="#f7dc6a"/>
<text x="537.2" y="534.1" font-size="2.7" fill="#553300" font-weight="normal" text-anchor="middle" >Donate</text>
<text x="512" y="538.8" font-size="2.3" fill="#555" font-weight="normal" text-anchor="middle"  textLength="55" lengthAdjust="spacingAndGlyphs">© Copyright 2006-2018 eTeks - All rights reserved</text>
<rect x="0" y="541" width="1000" height="21" fill="#0f0f10" stroke="none" stroke-width="1" />
<rect x="153" y="541" width="25" height="21" fill="#3a3a3a" stroke="none" stroke-width="1" />
<polygon points="8.2,547.8 12,547.2 12,550.9 8.2,550.9" fill="#fff" stroke="none" stroke-width="1" />
<polygon points="12.7,547.1 16.8,546.5 16.8,550.9 12.7,550.9" fill="#fff" stroke="none" stroke-width="1" />
<polygon points="8.2,551.6 12,551.6 12,555.3 8.2,554.8" fill="#fff" stroke="none" stroke-width="1" />
<polygon points="12.7,551.6 16.8,551.6 16.8,556 12.7,555.4" fill="#fff" stroke="none" stroke-width="1" />
<circle cx="38.8" cy="550" r="3.3" fill="none" stroke="#fff" stroke-width="1"/>
<line x1="36.5" y1="552.5" x2="33.6" y2="555.4" stroke="#fff" stroke-width="1.2" />
<rect x="58" y="548.2" width="9" height="6.3" rx="1" fill="none" stroke="#fff" stroke-width="0.9"/>
<line x1="56.5" y1="549.5" x2="56.5" y2="553.5" stroke="#fff" stroke-width="0.8" />
<line x1="68.7" y1="549.5" x2="68.7" y2="553.5" stroke="#fff" stroke-width="0.8" />
<rect x="84" y="545.2" width="9.7" height="12.3" rx="1" fill="#f4f4f4"/>
<rect x="85.3" y="546.5" width="7.1" height="2.3" fill="#333" stroke="none" stroke-width="1" />
<rect x="85.4" y="549.7" width="1.7" height="1.8" fill="#444" stroke="none" stroke-width="1" />
<rect x="87.9" y="549.7" width="1.7" height="1.8" fill="#444" stroke="none" stroke-width="1" />
<rect x="90.4" y="549.7" width="1.7" height="1.8" fill="#444" stroke="none" stroke-width="1" />
<rect x="85.4" y="552.3000000000001" width="1.7" height="1.8" fill="#444" stroke="none" stroke-width="1" />
<rect x="87.9" y="552.3000000000001" width="1.7" height="1.8" fill="#444" stroke="none" stroke-width="1" />
<rect x="90.4" y="552.3000000000001" width="1.7" height="1.8" fill="#444" stroke="none" stroke-width="1" />
<rect x="85.4" y="554.9000000000001" width="1.7" height="1.8" fill="#444" stroke="none" stroke-width="1" />
<rect x="87.9" y="554.9000000000001" width="1.7" height="1.8" fill="#444" stroke="none" stroke-width="1" />
<rect x="90.4" y="554.9000000000001" width="1.7" height="1.8" fill="#444" stroke="none" stroke-width="1" />
<circle cx="114.4" cy="551.8" r="5.7" fill="#db4437"/>
<path d="M114.4,551.8 L109.5,554.65 A5.7,5.7 0 0 0 119.3,554.65 Z" fill="#0f9d58" stroke="none" stroke-width="1" />
<path d="M114.4,551.8 L119.3,554.65 A5.7,5.7 0 0 0 114.4,546.1 Z" fill="#f4c20d" stroke="none" stroke-width="1" />
<circle cx="114.4" cy="551.8" r="2.7" fill="#fff"/><circle cx="114.4" cy="551.8" r="2" fill="#4285f4"/>
<line x1="104" y1="561.3" x2="124.5" y2="561.3" stroke="#6e9dd0" stroke-width="1.2" />
<rect x="134.2" y="547.5" width="11.3" height="8.5" fill="#f0d27a" stroke="none" stroke-width="1" />
<rect x="134.2" y="549.5" width="11.3" height="6.5" fill="#f9e3a0" stroke="none" stroke-width="1" />
<rect x="137" y="552" width="6" height="2.2" fill="#4aa0d8" stroke="none" stroke-width="1" />
<line x1="129.5" y1="561.3" x2="150" y2="561.3" stroke="#6e9dd0" stroke-width="1.2" />
<text x="165.5" y="557.2" font-size="14" fill="#38b0e8" font-weight="bold" text-anchor="middle" >e</text>
<ellipse cx="165.5" cy="551.5" rx="8" ry="4" fill="none" stroke="#e8c040" stroke-width="1" transform="rotate(-40 165.5 551.5)" stroke-dasharray="14 12"/>
<line x1="154" y1="561.3" x2="177" y2="561.3" stroke="#6e9dd0" stroke-width="1.2" />
<circle cx="190.5" cy="551.5" r="5.8" fill="#1d3c66"/>
<path d="M186,553 L189,554.5 L193,550" fill="none" stroke="#fff" stroke-width="1.4" />
<circle cx="193" cy="549.8" r="1.5" fill="#fff"/>
<line x1="181" y1="561.3" x2="201" y2="561.3" stroke="#6e9dd0" stroke-width="1.2" />
<rect x="210" y="545.5" width="12" height="12" rx="5.5" fill="#1aa4e0"/>
<text x="216" y="555" font-size="9" fill="#fff" font-weight="bold" text-anchor="middle" >S</text>
<line x1="206.5" y1="561.3" x2="227" y2="561.3" stroke="#6e9dd0" stroke-width="1.2" />
<ellipse cx="242" cy="552" rx="5.5" ry="4" fill="#c8cccc" transform="rotate(-30 242 552)"/>
<circle cx="246.5" cy="546" r="1.2" fill="#ddd"/>
<line x1="232" y1="561.3" x2="252" y2="561.3" stroke="#6e9dd0" stroke-width="1.2" />
<circle cx="870.5" cy="548.5" r="1.7" fill="none" stroke="#fff" stroke-width="0.8"/>
<path d="M866.5,555.5 Q867,551.5 870.5,551.5 Q874,551.5 874.5,555.5" fill="none" stroke="#fff" stroke-width="0.8" />
<circle cx="867.5" cy="550" r="1.3" fill="none" stroke="#fff" stroke-width="0.7"/>
<path d="M885.5,552.8 L888.3,550 L891.1,552.8" fill="none" stroke="#fff" stroke-width="0.9" />
<rect x="896.8" y="549.8" width="4" height="3.5" fill="#fff" stroke="none" stroke-width="1" />
<rect x="901" y="549.3" width="5" height="4.5" fill="#fff" stroke="none" stroke-width="1" />
<rect x="906" y="550.3" width="0.8" height="2.5" fill="#fff" stroke="none" stroke-width="1" />
<path d="M909.5,549.8 L911.3,549.8 L913.8,547.5 L913.8,555.5 L911.3,553.2 L909.5,553.2 Z" fill="none" stroke="#fff" stroke-width="0.8" />
<path d="M915.5,549.3 Q916.8,551.5 915.5,553.8 M917.3,548.3 Q919.2,551.5 917.3,554.8" fill="none" stroke="#fff" stroke-width="0.6" />
<text x="928.3" y="554" font-size="6.4" fill="#fff" font-weight="normal" text-anchor="middle"  textLength="11.3" lengthAdjust="spacingAndGlyphs">ENG</text>
<text x="954.8" y="549.5" font-size="6.4" fill="#fff" font-weight="normal" text-anchor="middle"  textLength="13.5" lengthAdjust="spacingAndGlyphs">22:59</text>
<text x="954.9" y="558.3" font-size="6.4" fill="#fff" font-weight="normal" text-anchor="middle"  textLength="28.5" lengthAdjust="spacingAndGlyphs">28.06.2018</text>
<path d="M976.8,546.5 L986,546.5 L986,553 L980.5,553 L978,555.3 L978,553 L976.8,553 Z" fill="none" stroke="#fff" stroke-width="0.9" />
<circle cx="985.8" cy="555.5" r="3" fill="#0f0f10" stroke="#fff" stroke-width="0.7"/>
<text x="985.8" y="557.4" font-size="4.6" fill="#fff" font-weight="bold" text-anchor="middle" >1</text>
<line x1="997.5" y1="541" x2="997.5" y2="562" stroke="#666" stroke-width="0.8" />
<rect x="187" y="85" width="801" height="436" fill="#fff" stroke="none" stroke-width="1" />
<clipPath id="vp"><rect x="196" y="94" width="783" height="418"/></clipPath>
<g clip-path="url(#vp)">
<line x1="199.8" y1="94" x2="199.8" y2="512" stroke="#d9d9d9" stroke-width="1.15" />
<line x1="215.7" y1="94" x2="215.7" y2="512" stroke="#d9d9d9" stroke-width="1.15" />
<line x1="223.65" y1="94" x2="223.65" y2="512" stroke="#d9d9d9" stroke-width="1.15" />
<line x1="231.6" y1="94" x2="231.6" y2="512" stroke="#d9d9d9" stroke-width="1.15" />
<line x1="239.55" y1="94" x2="239.55" y2="512" stroke="#d9d9d9" stroke-width="1.15" />
<line x1="255.45" y1="94" x2="255.45" y2="512" stroke="#d9d9d9" stroke-width="1.15" />
<line x1="263.4" y1="94" x2="263.4" y2="512" stroke="#d9d9d9" stroke-width="1.15" />
<line x1="271.35" y1="94" x2="271.35" y2="512" stroke="#d9d9d9" stroke-width="1.15" />
<line x1="279.3" y1="94" x2="279.3" y2="512" stroke="#d9d9d9" stroke-width="1.15" />
<line x1="295.2" y1="94" x2="295.2" y2="512" stroke="#d9d9d9" stroke-width="1.15" />
<line x1="303.15" y1="94" x2="303.15" y2="512" stroke="#d9d9d9" stroke-width="1.15" />
<line x1="311.1" y1="94" x2="311.1" y2="512" stroke="#d9d9d9" stroke-width="1.15" />
<line x1="319.05" y1="94" x2="319.05" y2="512" stroke="#d9d9d9" stroke-width="1.15" />
<line x1="334.95" y1="94" x2="334.95" y2="512" stroke="#d9d9d9" stroke-width="1.15" />
<line x1="342.9" y1="94" x2="342.9" y2="512" stroke="#d9d9d9" stroke-width="1.15" />
<line x1="350.85" y1="94" x2="350.85" y2="512" stroke="#d9d9d9" stroke-width="1.15" />
<line x1="358.8" y1="94" x2="358.8" y2="512" stroke="#d9d9d9" stroke-width="1.15" />
<line x1="374.7" y1="94" x2="374.7" y2="512" stroke="#d9d9d9" stroke-width="1.15" />
<line x1="382.65" y1="94" x2="382.65" y2="512" stroke="#d9d9d9" stroke-width="1.15" />
<line x1="390.6" y1="94" x2="390.6" y2="512" stroke="#d9d9d9" stroke-width="1.15" />
<line x1="398.55" y1="94" x2="398.55" y2="512" stroke="#d9d9d9" stroke-width="1.15" />
<line x1="414.45" y1="94" x2="414.45" y2="512" stroke="#d9d9d9" stroke-width="1.15" />
<line x1="422.4" y1="94" x2="422.4" y2="512" stroke="#d9d9d9" stroke-width="1.15" />
<line x1="430.35" y1="94" x2="430.35" y2="512" stroke="#d9d9d9" stroke-width="1.15" />
<line x1="438.3" y1="94" x2="438.3" y2="512" stroke="#d9d9d9" stroke-width="1.15" />
<line x1="454.2" y1="94" x2="454.2" y2="512" stroke="#d9d9d9" stroke-width="1.15" />
<line x1="462.15" y1="94" x2="462.15" y2="512" stroke="#d9d9d9" stroke-width="1.15" />
<line x1="470.1" y1="94" x2="470.1" y2="512" stroke="#d9d9d9" stroke-width="1.15" />
<line x1="478.05" y1="94" x2="478.05" y2="512" stroke="#d9d9d9" stroke-width="1.15" />
<line x1="493.95" y1="94" x2="493.95" y2="512" stroke="#d9d9d9" stroke-width="1.15" />
<line x1="501.9" y1="94" x2="501.9" y2="512" stroke="#d9d9d9" stroke-width="1.15" />
<line x1="509.85" y1="94" x2="509.85" y2="512" stroke="#d9d9d9" stroke-width="1.15" />
<line x1="517.8" y1="94" x2="517.8" y2="512" stroke="#d9d9d9" stroke-width="1.15" />
<line x1="533.7" y1="94" x2="533.7" y2="512" stroke="#d9d9d9" stroke-width="1.15" />
<line x1="541.65" y1="94" x2="541.65" y2="512" stroke="#d9d9d9" stroke-width="1.15" />
<line x1="549.6" y1="94" x2="549.6" y2="512" stroke="#d9d9d9" stroke-width="1.15" />
<line x1="557.55" y1="94" x2="557.55" y2="512" stroke="#d9d9d9" stroke-width="1.15" />
<line x1="573.45" y1="94" x2="573.45" y2="512" stroke="#d9d9d9" stroke-width="1.15" />
<line x1="581.4" y1="94" x2="581.4" y2="512" stroke="#d9d9d9" stroke-width="1.15" />
<line x1="589.35" y1="94" x2="589.35" y2="512" stroke="#d9d9d9" stroke-width="1.15" />
<line x1="597.3" y1="94" x2="597.3" y2="512" stroke="#d9d9d9" stroke-width="1.15" />
<line x1="613.2" y1="94" x2="613.2" y2="512" stroke="#d9d9d9" stroke-width="1.15" />
<line x1="621.15" y1="94" x2="621.15" y2="512" stroke="#d9d9d9" stroke-width="1.15" />
<line x1="629.1" y1="94" x2="629.1" y2="512" stroke="#d9d9d9" stroke-width="1.15" />
<line x1="637.05" y1="94" x2="637.05" y2="512" stroke="#d9d9d9" stroke-width="1.15" />
<line x1="652.95" y1="94" x2="652.95" y2="512" stroke="#d9d9d9" stroke-width="1.15" />
<line x1="660.9" y1="94" x2="660.9" y2="512" stroke="#d9d9d9" stroke-width="1.15" />
<line x1="668.85" y1="94" x2="668.85" y2="512" stroke="#d9d9d9" stroke-width="1.15" />
<line x1="676.8" y1="94" x2="676.8" y2="512" stroke="#d9d9d9" stroke-width="1.15" />
<line x1="692.7" y1="94" x2="692.7" y2="512" stroke="#d9d9d9" stroke-width="1.15" />
<line x1="700.65" y1="94" x2="700.65" y2="512" stroke="#d9d9d9" stroke-width="1.15" />
<line x1="708.6" y1="94" x2="708.6" y2="512" stroke="#d9d9d9" stroke-width="1.15" />
<line x1="716.55" y1="94" x2="716.55" y2="512" stroke="#d9d9d9" stroke-width="1.15" />
<line x1="732.45" y1="94" x2="732.45" y2="512" stroke="#d9d9d9" stroke-width="1.15" />
<line x1="740.4" y1="94" x2="740.4" y2="512" stroke="#d9d9d9" stroke-width="1.15" />
<line x1="748.35" y1="94" x2="748.35" y2="512" stroke="#d9d9d9" stroke-width="1.15" />
<line x1="756.3" y1="94" x2="756.3" y2="512" stroke="#d9d9d9" stroke-width="1.15" />
<line x1="772.2" y1="94" x2="772.2" y2="512" stroke="#d9d9d9" stroke-width="1.15" />
<line x1="780.15" y1="94" x2="780.15" y2="512" stroke="#d9d9d9" stroke-width="1.15" />
<line x1="788.1" y1="94" x2="788.1" y2="512" stroke="#d9d9d9" stroke-width="1.15" />
<line x1="796.05" y1="94" x2="796.05" y2="512" stroke="#d9d9d9" stroke-width="1.15" />
<line x1="811.95" y1="94" x2="811.95" y2="512" stroke="#d9d9d9" stroke-width="1.15" />
<line x1="819.9" y1="94" x2="819.9" y2="512" stroke="#d9d9d9" stroke-width="1.15" />
<line x1="827.85" y1="94" x2="827.85" y2="512" stroke="#d9d9d9" stroke-width="1.15" />
<line x1="835.8" y1="94" x2="835.8" y2="512" stroke="#d9d9d9" stroke-width="1.15" />
<line x1="851.7" y1="94" x2="851.7" y2="512" stroke="#d9d9d9" stroke-width="1.15" />
<line x1="859.65" y1="94" x2="859.65" y2="512" stroke="#d9d9d9" stroke-width="1.15" />
<line x1="867.6" y1="94" x2="867.6" y2="512" stroke="#d9d9d9" stroke-width="1.15" />
<line x1="875.55" y1="94" x2="875.55" y2="512" stroke="#d9d9d9" stroke-width="1.15" />
<line x1="891.45" y1="94" x2="891.45" y2="512" stroke="#d9d9d9" stroke-width="1.15" />
<line x1="899.4" y1="94" x2="899.4" y2="512" stroke="#d9d9d9" stroke-width="1.15" />
<line x1="907.35" y1="94" x2="907.35" y2="512" stroke="#d9d9d9" stroke-width="1.15" />
<line x1="915.3" y1="94" x2="915.3" y2="512" stroke="#d9d9d9" stroke-width="1.15" />
<line x1="931.2" y1="94" x2="931.2" y2="512" stroke="#d9d9d9" stroke-width="1.15" />
<line x1="939.15" y1="94" x2="939.15" y2="512" stroke="#d9d9d9" stroke-width="1.15" />
<line x1="947.1" y1="94" x2="947.1" y2="512" stroke="#d9d9d9" stroke-width="1.15" />
<line x1="955.05" y1="94" x2="955.05" y2="512" stroke="#d9d9d9" stroke-width="1.15" />
<line x1="970.95" y1="94" x2="970.95" y2="512" stroke="#d9d9d9" stroke-width="1.15" />
<line x1="978.9" y1="94" x2="978.9" y2="512" stroke="#d9d9d9" stroke-width="1.15" />
<line x1="196" y1="95.7" x2="979" y2="95.7" stroke="#d9d9d9" stroke-width="1.15" />
<line x1="196" y1="111.6" x2="979" y2="111.6" stroke="#d9d9d9" stroke-width="1.15" />
<line x1="196" y1="119.55" x2="979" y2="119.55" stroke="#d9d9d9" stroke-width="1.15" />
<line x1="196" y1="127.5" x2="979" y2="127.5" stroke="#d9d9d9" stroke-width="1.15" />
<line x1="196" y1="135.45" x2="979" y2="135.45" stroke="#d9d9d9" stroke-width="1.15" />
<line x1="196" y1="151.35" x2="979" y2="151.35" stroke="#d9d9d9" stroke-width="1.15" />
<line x1="196" y1="159.3" x2="979" y2="159.3" stroke="#d9d9d9" stroke-width="1.15" />
<line x1="196" y1="167.25" x2="979" y2="167.25" stroke="#d9d9d9" stroke-width="1.15" />
<line x1="196" y1="175.2" x2="979" y2="175.2" stroke="#d9d9d9" stroke-width="1.15" />
<line x1="196" y1="191.1" x2="979" y2="191.1" stroke="#d9d9d9" stroke-width="1.15" />
<line x1="196" y1="199.05" x2="979" y2="199.05" stroke="#d9d9d9" stroke-width="1.15" />
<line x1="196" y1="207.0" x2="979" y2="207.0" stroke="#d9d9d9" stroke-width="1.15" />
<line x1="196" y1="214.95" x2="979" y2="214.95" stroke="#d9d9d9" stroke-width="1.15" />
<line x1="196" y1="230.85" x2="979" y2="230.85" stroke="#d9d9d9" stroke-width="1.15" />
<line x1="196" y1="238.8" x2="979" y2="238.8" stroke="#d9d9d9" stroke-width="1.15" />
<line x1="196" y1="246.75" x2="979" y2="246.75" stroke="#d9d9d9" stroke-width="1.15" />
<line x1="196" y1="254.7" x2="979" y2="254.7" stroke="#d9d9d9" stroke-width="1.15" />
<line x1="196" y1="270.6" x2="979" y2="270.6" stroke="#d9d9d9" stroke-width="1.15" />
<line x1="196" y1="278.55" x2="979" y2="278.55" stroke="#d9d9d9" stroke-width="1.15" />
<line x1="196" y1="286.5" x2="979" y2="286.5" stroke="#d9d9d9" stroke-width="1.15" />
<line x1="196" y1="294.45" x2="979" y2="294.45" stroke="#d9d9d9" stroke-width="1.15" />
<line x1="196" y1="310.35" x2="979" y2="310.35" stroke="#d9d9d9" stroke-width="1.15" />
<line x1="196" y1="318.3" x2="979" y2="318.3" stroke="#d9d9d9" stroke-width="1.15" />
<line x1="196" y1="326.25" x2="979" y2="326.25" stroke="#d9d9d9" stroke-width="1.15" />
<line x1="196" y1="334.2" x2="979" y2="334.2" stroke="#d9d9d9" stroke-width="1.15" />
<line x1="196" y1="350.1" x2="979" y2="350.1" stroke="#d9d9d9" stroke-width="1.15" />
<line x1="196" y1="358.05" x2="979" y2="358.05" stroke="#d9d9d9" stroke-width="1.15" />
<line x1="196" y1="366.0" x2="979" y2="366.0" stroke="#d9d9d9" stroke-width="1.15" />
<line x1="196" y1="373.95" x2="979" y2="373.95" stroke="#d9d9d9" stroke-width="1.15" />
<line x1="196" y1="389.85" x2="979" y2="389.85" stroke="#d9d9d9" stroke-width="1.15" />
<line x1="196" y1="397.8" x2="979" y2="397.8" stroke="#d9d9d9" stroke-width="1.15" />
<line x1="196" y1="405.75" x2="979" y2="405.75" stroke="#d9d9d9" stroke-width="1.15" />
<line x1="196" y1="413.7" x2="979" y2="413.7" stroke="#d9d9d9" stroke-width="1.15" />
<line x1="196" y1="429.6" x2="979" y2="429.6" stroke="#d9d9d9" stroke-width="1.15" />
<line x1="196" y1="437.55" x2="979" y2="437.55" stroke="#d9d9d9" stroke-width="1.15" />
<line x1="196" y1="445.5" x2="979" y2="445.5" stroke="#d9d9d9" stroke-width="1.15" />
<line x1="196" y1="453.45" x2="979" y2="453.45" stroke="#d9d9d9" stroke-width="1.15" />
<line x1="196" y1="469.35" x2="979" y2="469.35" stroke="#d9d9d9" stroke-width="1.15" />
<line x1="196" y1="477.3" x2="979" y2="477.3" stroke="#d9d9d9" stroke-width="1.15" />
<line x1="196" y1="485.25" x2="979" y2="485.25" stroke="#d9d9d9" stroke-width="1.15" />
<line x1="196" y1="493.2" x2="979" y2="493.2" stroke="#d9d9d9" stroke-width="1.15" />
<line x1="196" y1="509.1" x2="979" y2="509.1" stroke="#d9d9d9" stroke-width="1.15" />
<line x1="207.75" y1="94" x2="207.75" y2="512" stroke="#a6a6a6" stroke-width="1.2" />
<line x1="247.5" y1="94" x2="247.5" y2="512" stroke="#a6a6a6" stroke-width="1.2" />
<line x1="287.25" y1="94" x2="287.25" y2="512" stroke="#a6a6a6" stroke-width="1.2" />
<line x1="327.0" y1="94" x2="327.0" y2="512" stroke="#a6a6a6" stroke-width="1.2" />
<line x1="366.75" y1="94" x2="366.75" y2="512" stroke="#a6a6a6" stroke-width="1.2" />
<line x1="406.5" y1="94" x2="406.5" y2="512" stroke="#a6a6a6" stroke-width="1.2" />
<line x1="446.25" y1="94" x2="446.25" y2="512" stroke="#a6a6a6" stroke-width="1.2" />
<line x1="486.0" y1="94" x2="486.0" y2="512" stroke="#a6a6a6" stroke-width="1.2" />
<line x1="525.75" y1="94" x2="525.75" y2="512" stroke="#a6a6a6" stroke-width="1.2" />
<line x1="565.5" y1="94" x2="565.5" y2="512" stroke="#a6a6a6" stroke-width="1.2" />
<line x1="605.25" y1="94" x2="605.25" y2="512" stroke="#a6a6a6" stroke-width="1.2" />
<line x1="645.0" y1="94" x2="645.0" y2="512" stroke="#a6a6a6" stroke-width="1.2" />
<line x1="684.75" y1="94" x2="684.75" y2="512" stroke="#a6a6a6" stroke-width="1.2" />
<line x1="724.5" y1="94" x2="724.5" y2="512" stroke="#a6a6a6" stroke-width="1.2" />
<line x1="764.25" y1="94" x2="764.25" y2="512" stroke="#a6a6a6" stroke-width="1.2" />
<line x1="804.0" y1="94" x2="804.0" y2="512" stroke="#a6a6a6" stroke-width="1.2" />
<line x1="843.75" y1="94" x2="843.75" y2="512" stroke="#a6a6a6" stroke-width="1.2" />
<line x1="883.5" y1="94" x2="883.5" y2="512" stroke="#a6a6a6" stroke-width="1.2" />
<line x1="923.25" y1="94" x2="923.25" y2="512" stroke="#a6a6a6" stroke-width="1.2" />
<line x1="963.0" y1="94" x2="963.0" y2="512" stroke="#a6a6a6" stroke-width="1.2" />
<line x1="196" y1="103.65" x2="979" y2="103.65" stroke="#a6a6a6" stroke-width="1.2" />
<line x1="196" y1="143.4" x2="979" y2="143.4" stroke="#a6a6a6" stroke-width="1.2" />
<line x1="196" y1="183.15" x2="979" y2="183.15" stroke="#a6a6a6" stroke-width="1.2" />
<line x1="196" y1="222.9" x2="979" y2="222.9" stroke="#a6a6a6" stroke-width="1.2" />
<line x1="196" y1="262.65" x2="979" y2="262.65" stroke="#a6a6a6" stroke-width="1.2" />
<line x1="196" y1="302.4" x2="979" y2="302.4" stroke="#a6a6a6" stroke-width="1.2" />
<line x1="196" y1="342.15" x2="979" y2="342.15" stroke="#a6a6a6" stroke-width="1.2" />
<line x1="196" y1="381.9" x2="979" y2="381.9" stroke="#a6a6a6" stroke-width="1.2" />
<line x1="196" y1="421.65" x2="979" y2="421.65" stroke="#a6a6a6" stroke-width="1.2" />
<line x1="196" y1="461.4" x2="979" y2="461.4" stroke="#a6a6a6" stroke-width="1.2" />
<line x1="196" y1="501.15" x2="979" y2="501.15" stroke="#a6a6a6" stroke-width="1.2" />
<defs><pattern id="hat" width="3.2" height="3.2" patternUnits="userSpaceOnUse" patternTransform="rotate(45)"><rect width="3.2" height="3.2" fill="#fff"/><line x1="0" y1="0" x2="0" y2="3.2" stroke="#2a2a2a" stroke-width="1"/></pattern><pattern id="hatb" width="3.2" height="3.2" patternUnits="userSpaceOnUse" patternTransform="rotate(45)"><rect width="3.2" height="3.2" fill="#222"/><line x1="0" y1="0" x2="0" y2="3.2" stroke="#fff" stroke-width="0.7"/></pattern></defs>
<polygon points="360,224 416,224 416,235 390,235 390,231.5 360,231.5" fill="rgba(255,255,255,0.8)" stroke="none" stroke-width="1" />
<rect x="745" y="117.5" width="73" height="12.5" fill="rgba(255,255,255,0.85)" stroke="none" stroke-width="1" />
<polygon points="283,258.5 625,258.5 625,213.5 771,213.5 771,259 897,259 897,288 912,288 912,350.5 897,350.5 897,381 882,381 882,388 652,388 652,383 618,383 618,388 561,388 561,383 536,383 536,388 300,388 300,381 284,381 284,350 268,350 268,293.6 283,293.6" fill="rgba(150,150,150,0.85)" stroke="none" stroke-width="1" />
<line x1="196" y1="259.3" x2="283" y2="259.3" stroke="#222" stroke-width="1" />
<rect x="217.5" y="262.2" width="50.7" height="127" fill="none" stroke="#2a2a2a" stroke-width="1.8" />
<line x1="219.8" y1="264" x2="219.8" y2="387.5" stroke="#777" stroke-width="0.8" />
<line x1="243.6" y1="264" x2="243.6" y2="388" stroke="#555" stroke-width="0.8" />
<line x1="218" y1="286.1" x2="268" y2="286.1" stroke="#555" stroke-width="0.8" />
<text x="242.7" y="284" font-size="7.4" fill="#1a1a1a" font-weight="normal" text-anchor="middle" >121</text>
<text font-size="7.4" fill="#1a1a1a" text-anchor="middle" transform="translate(246.5,325.7) rotate(90)">316</text>
<polyline points="283,293.6 283,258.5 438,258.5" fill="none" stroke="#111" stroke-width="2.4" />
<polyline points="268,293.6 283,293.6" fill="none" stroke="#111" stroke-width="2.0" />
<polyline points="268,294 268,350" fill="none" stroke="#111" stroke-width="1.2" />
<polyline points="268,350 284,350 284,381 300,381 300,388 438,388" fill="none" stroke="#111" stroke-width="2.0" />
<line x1="438" y1="258.5" x2="625" y2="258.5" stroke="#1b2b4a" stroke-width="2.2" />
<rect x="555" y="213.3" width="69.5" height="44.5" fill="none" stroke="#1b2b4a" stroke-width="1.8" />
<line x1="594.3" y1="213.3" x2="594.3" y2="300" stroke="#333" stroke-width="0.7" />
<text font-size="7.4" fill="#1a1a1a" text-anchor="middle" transform="translate(589.8,256.6) rotate(90)">209</text>
<line x1="540" y1="266.7" x2="555" y2="266.7" stroke="#333" stroke-width="0.7" />
<polyline points="625,258.5 625,213.3 771,213.3 771,259" fill="none" stroke="#1b2b4a" stroke-width="2.2" />
<polyline points="771,259.4 897,259.4" fill="none" stroke="#1b2b4a" stroke-width="2.2" />
<polyline points="897,288 912,288 912,350.5 897,350.5 897,381 882,381 882,388 656,388" fill="none" stroke="#1b2b4a" stroke-width="2.2" />
<rect x="897.5" y="218" width="15" height="70" fill="url(#hat)" stroke="#333" stroke-width="0.8" />
<rect x="437.5" y="258.5" width="4" height="40.5" fill="#fff" stroke="#1b2b4a" stroke-width="1.1" />
<rect x="437.7" y="299" width="3.8" height="89" fill="url(#hat)" stroke="#1b2b4a" stroke-width="0.9" />
<rect x="652" y="299" width="4.5" height="89" fill="url(#hat)" stroke="#1b2b4a" stroke-width="0.9" />
<rect x="441" y="297.3" width="96" height="4" fill="url(#hat)" stroke="#1b2b4a" stroke-width="0.9" />
<rect x="583.8" y="297.3" width="68.5" height="4" fill="url(#hat)" stroke="#1b2b4a" stroke-width="0.9" />
<rect x="537" y="297.8" width="46.8" height="3.2" fill="#fff" stroke="none" stroke-width="1" />
<polyline points="438,388 536,388 536,383 561,383 561,388 618,388 618,383 652,383" fill="none" stroke="#111" stroke-width="2.0" />
<rect x="536.5" y="383.5" width="24" height="4.5" fill="#fff" stroke="none" stroke-width="1" />
<rect x="618.5" y="383.5" width="33" height="4.5" fill="#fff" stroke="none" stroke-width="1" />
<line x1="536" y1="388.3" x2="561" y2="388.3" stroke="#333" stroke-width="0.8" />
<line x1="618" y1="388.3" x2="652" y2="388.3" stroke="#333" stroke-width="0.8" />
<rect x="606" y="129.6" width="8.7" height="83" fill="#fff" stroke="#888" stroke-width="0.8" stroke-dasharray="2 1"/>
<rect x="616" y="135" width="13" height="77.7" fill="url(#hatb)" stroke="#111" stroke-width="0.8" />
<polyline points="630.3,212 630.3,135 771,135 771,212.5" fill="none" stroke="#222" stroke-width="1.8" />
<line x1="632.5" y1="137" x2="632.5" y2="208" stroke="#666" stroke-width="0.7" />
<line x1="639" y1="137" x2="639" y2="208" stroke="#777" stroke-width="0.6" />
<rect x="667.5" y="135" width="4.9" height="73" fill="url(#hat)" stroke="#333" stroke-width="0.6" />
<rect x="630" y="208" width="141" height="5" fill="url(#hat)" stroke="#333" stroke-width="0.6" />
<line x1="672.5" y1="137" x2="743.7" y2="137" stroke="#666" stroke-width="0.6" />
<rect x="744.5" y="150.5" width="26" height="58" fill="#fff" stroke="none" stroke-width="1" />
<line x1="743.7" y1="135" x2="743.7" y2="212" stroke="#333" stroke-width="1.4" />
<rect x="759" y="135" width="12" height="15" fill="none" stroke="#333" stroke-width="1.2" />
<rect x="761.5" y="137.5" width="7" height="10" fill="none" stroke="#555" stroke-width="0.6" />
<line x1="743.7" y1="150" x2="771" y2="150" stroke="#333" stroke-width="0.8" />
<text x="759.4" y="168" font-size="7.4" fill="#1a1a1a" font-weight="normal" text-anchor="middle" >Вент.</text>
<text x="759.4" y="178" font-size="7.4" fill="#1a1a1a" font-weight="normal" text-anchor="middle" >шахта</text>
<line x1="630.6" y1="120.5" x2="743.7" y2="120.5" stroke="#222" stroke-width="0.8" />
<line x1="630.6" y1="117" x2="630.6" y2="135" stroke="#222" stroke-width="0.6" />
<line x1="743.7" y1="117" x2="743.7" y2="135" stroke="#222" stroke-width="0.6" />
<text x="686.7" y="118.5" font-size="7.8" fill="#222" font-weight="normal" text-anchor="middle" >281</text>
<text x="610.8" y="126" font-size="7.8" fill="#1a1a1a" font-weight="normal" text-anchor="middle" >20</text>
<line x1="604.5" y1="130.5" x2="616" y2="127.5" stroke="#222" stroke-width="0.7" />
<text font-size="7.4" fill="#1a1a1a" text-anchor="middle" transform="translate(632,175.5) rotate(90)">185</text>
<line x1="630.5" y1="199.8" x2="667" y2="199.8" stroke="#333" stroke-width="0.7" />
<text x="649.7" y="197.5" font-size="7.4" fill="#1a1a1a" font-weight="normal" text-anchor="middle" >90</text>
<line x1="672.5" y1="191.3" x2="743" y2="191.3" stroke="#333" stroke-width="0.7" />
<text x="707.5" y="191" font-size="7.4" fill="#1a1a1a" font-weight="normal" text-anchor="middle" >178</text>
<text font-size="6.5" fill="#222" text-anchor="middle" transform="translate(733,171) rotate(90)">18</text>
<text x="750.8" y="140.8" font-size="7.4" fill="#1a1a1a" font-weight="normal" text-anchor="middle" >40</text>
<line x1="744" y1="143.5" x2="759" y2="143.5" stroke="#333" stroke-width="0.6" />
<text x="731.7" y="205" font-size="7.4" fill="#1a1a1a" font-weight="normal" text-anchor="middle" >55</text>
<line x1="720" y1="208" x2="743" y2="208" stroke="#333" stroke-width="0.6" />
<polyline points="773.6,212.5 773.6,134.8 896.8,134.8 896.8,161 911,161 911,141.3 962.3,141.3 962.3,260" fill="none" stroke="#222" stroke-width="1.8" />
<line x1="776" y1="137" x2="776" y2="212" stroke="#777" stroke-width="0.6" />
<line x1="776" y1="137" x2="895" y2="137" stroke="#777" stroke-width="0.6" />
<rect x="771.5" y="150" width="4.5" height="107" fill="#fff" stroke="#1b2b4a" stroke-width="0.9" />
<rect x="771" y="255.5" width="126" height="4" fill="url(#hat)" stroke="#1b2b4a" stroke-width="0.9" />
<rect x="912" y="256" width="50" height="4.5" fill="url(#hat)" stroke="#333" stroke-width="0.7" />
<line x1="897" y1="161" x2="897" y2="218" stroke="#222" stroke-width="0.8" />
<polyline points="912,347 912,386 961.5,386 961.5,260" fill="none" stroke="#333" stroke-width="1.5" />
<line x1="914.5" y1="350" x2="914.5" y2="383.5" stroke="#888" stroke-width="0.6" />
<line x1="914.5" y1="383.5" x2="959" y2="383.5" stroke="#888" stroke-width="0.6" />
<line x1="959" y1="262" x2="959" y2="383.5" stroke="#888" stroke-width="0.6" />
<line x1="958.5" y1="143.5" x2="958.5" y2="256" stroke="#888" stroke-width="0.6" />
<line x1="913.5" y1="143.5" x2="913.5" y2="161" stroke="#888" stroke-width="0.6" />
<path d="M943.8,145 A16.2,16.2 0 0 0 960,161.2" fill="none" stroke="#333" stroke-width="0.65" />
<line x1="943.8" y1="145" x2="960" y2="145" stroke="#333" stroke-width="0.9" />
<path d="M960,164.8 A16.2,16.2 0 0 0 943.8,181 A16.2,16.2 0 0 0 960,197.2" fill="none" stroke="#333" stroke-width="0.65" />
<line x1="943.8" y1="181" x2="960" y2="181" stroke="#333" stroke-width="0.9" />
<path d="M960,199.8 A16.2,16.2 0 0 0 943.8,216 A16.2,16.2 0 0 0 960,232.2" fill="none" stroke="#333" stroke-width="0.65" />
<line x1="943.8" y1="216" x2="960" y2="216" stroke="#333" stroke-width="0.9" />
<path d="M960,235.8 A16.2,16.2 0 0 0 943.8,252 " fill="none" stroke="#333" stroke-width="0.65" />
<line x1="943.8" y1="252" x2="960" y2="252" stroke="#333" stroke-width="0.9" />
<path d="M941.1,264.2 A19.4,19.4 0 0 0 960.5,283.59999999999997" fill="none" stroke="#333" stroke-width="0.65" />
<line x1="941.1" y1="264.2" x2="960.5" y2="264.2" stroke="#333" stroke-width="0.9" />
<path d="M960.5,284.90000000000003 A19.4,19.4 0 0 0 941.1,304.3 A19.4,19.4 0 0 0 960.5,323.7" fill="none" stroke="#333" stroke-width="0.65" />
<line x1="941.1" y1="304.3" x2="960.5" y2="304.3" stroke="#333" stroke-width="0.9" />
<path d="M960.5,324.90000000000003 A19.4,19.4 0 0 0 941.1,344.3 A19.4,19.4 0 0 0 960.5,363.7" fill="none" stroke="#333" stroke-width="0.65" />
<line x1="941.1" y1="344.3" x2="960.5" y2="344.3" stroke="#333" stroke-width="0.9" />
<path d="M960.5,365.0 A19.4,19.4 0 0 0 941.1,384.4 " fill="none" stroke="#333" stroke-width="0.65" />
<line x1="941.1" y1="384.4" x2="960.5" y2="384.4" stroke="#333" stroke-width="0.9" />
<line x1="777" y1="159" x2="895" y2="159" stroke="#333" stroke-width="0.7" />
<text x="835.5" y="161" font-size="7.4" fill="#1a1a1a" font-weight="normal" text-anchor="middle" >302</text>
<line x1="795.6" y1="137" x2="795.6" y2="214.4" stroke="#333" stroke-width="0.7" />
<text font-size="7.4" fill="#1a1a1a" text-anchor="middle" transform="translate(798,175.5) rotate(90)">200</text>
<line x1="833.5" y1="137" x2="833.5" y2="256" stroke="#333" stroke-width="0.7" />
<text font-size="7.4" fill="#1a1a1a" text-anchor="middle" transform="translate(826.4,196.9) rotate(90)">304</text>
<line x1="886.5" y1="137" x2="886.5" y2="160" stroke="#333" stroke-width="0.7" />
<text font-size="7.4" fill="#1a1a1a" text-anchor="middle" transform="translate(880.5,148.4) rotate(90)">65</text>
<line x1="902" y1="161" x2="902" y2="218" stroke="#333" stroke-width="0.7" />
<text font-size="7.4" fill="#1a1a1a" text-anchor="middle" transform="translate(896,189.7) rotate(90)">144</text>
<line x1="925" y1="143" x2="925" y2="256" stroke="#333" stroke-width="0.7" />
<text font-size="7.4" fill="#1a1a1a" text-anchor="middle" transform="translate(919,198.3) rotate(90)">290</text>
<line x1="913" y1="159" x2="960" y2="159" stroke="#333" stroke-width="0.7" />
<text x="937" y="156.5" font-size="7.4" fill="#1a1a1a" font-weight="normal" text-anchor="middle" >120</text>
<line x1="891" y1="218" x2="891" y2="256" stroke="#333" stroke-width="0.7" />
<text font-size="7.4" fill="#1a1a1a" text-anchor="middle" transform="translate(883.4,238) rotate(90)">96</text>
<text x="835.3" y="237.3" font-size="9" fill="#d8282e" font-weight="bold" text-anchor="middle"  textLength="37.5" lengthAdjust="spacingAndGlyphs">Детская</text>
<path d="M776.5,222 A27.3,29.2 0 0 1 803.8,251.2" fill="none" stroke="#333" stroke-width="0.65" />
<line x1="776.5" y1="251.2" x2="803.8" y2="251.2" stroke="#333" stroke-width="0.65" />
<line x1="777" y1="214.4" x2="796" y2="214.4" stroke="#222" stroke-width="0.8" stroke-dasharray="3 1.5"/>
<line x1="771" y1="264.5" x2="896" y2="264.5" stroke="#333" stroke-width="0.7" />
<text x="833.8" y="267" font-size="7.4" fill="#1a1a1a" font-weight="normal" text-anchor="middle" >316</text>
<rect x="854" y="262.8" width="33.5" height="8.3" fill="none" stroke="#f2e21a" stroke-width="2.2" />
<text x="855.5" y="281" font-size="7.2" fill="#e8d81a" font-weight="bold" text-anchor="middle"  textLength="69" lengthAdjust="spacingAndGlyphs">кондиционер 35 кв</text>
<line x1="731.5" y1="214" x2="731.5" y2="388" stroke="#333" stroke-width="0.7" />
<text font-size="7.4" fill="#1a1a1a" text-anchor="middle" transform="translate(723.5,301) rotate(90)">437</text>
<line x1="851" y1="263" x2="851" y2="388" stroke="#333" stroke-width="0.7" />
<text font-size="7.4" fill="#1a1a1a" text-anchor="middle" transform="translate(843.5,323.3) rotate(90)">320</text>
<text font-size="7.4" fill="#1a1a1a" text-anchor="middle" transform="translate(894.7,320) rotate(90)">157</text>
<text font-size="7.4" fill="#1a1a1a" text-anchor="middle" transform="translate(925.3,323.3) rotate(90)">310</text>
<line x1="913" y1="350.5" x2="960" y2="350.5" stroke="#333" stroke-width="0.7" />
<text x="935.8" y="358" font-size="7.4" fill="#1a1a1a" font-weight="normal" text-anchor="middle" >120</text>
<line x1="657" y1="356" x2="896" y2="356" stroke="#333" stroke-width="0.7" />
<text x="776" y="354" font-size="7.4" fill="#1a1a1a" font-weight="normal" text-anchor="middle" >601</text>
<text x="739.4" y="344.8" font-size="8.8" fill="#d8282e" font-weight="bold" text-anchor="middle"  textLength="75.6" lengthAdjust="spacingAndGlyphs">Кухня гостинная</text>
<text x="720.8" y="325.6" font-size="6.8" fill="#e8d81a" font-weight="bold" text-anchor="middle"  textLength="66.3" lengthAdjust="spacingAndGlyphs">Вытяжка на кухне</text>
<text x="671.8" y="300" font-size="9.2" fill="#111" font-weight="normal" text-anchor="middle"  textLength="29.5" lengthAdjust="spacingAndGlyphs">29,9 м²</text>
<path d="M637,214 A22,22 0 0 0 659,237.4 L659,214" fill="none" stroke="#333" stroke-width="0.6" />
<path d="M694.6,214 A23.4,23.4 0 0 0 718,237.4 L718,214" fill="none" stroke="#333" stroke-width="0.6" />
<path d="M574,213 A36,36 0 0 1 610,177 L610,213" fill="none" stroke="#333" stroke-width="0.6" />
<text x="293" y="246" font-size="7.8" fill="#111" font-weight="bold" text-anchor="start"  textLength="82" lengthAdjust="spacingAndGlyphs">кондиционер на 25 кв</text>
<rect x="293.8" y="258.6" width="42.6" height="10.6" fill="none" stroke="#f2e21a" stroke-width="3" />
<line x1="337.5" y1="263" x2="388" y2="263" stroke="#222" stroke-width="0.8" stroke-dasharray="4 2"/>
<line x1="285" y1="267.4" x2="438" y2="267.4" stroke="#333" stroke-width="0.7" />
<text x="419.5" y="275" font-size="7.4" fill="#1a1a1a" font-weight="normal" text-anchor="middle" >684</text>
<text x="352.5" y="325" font-size="10" fill="#111" font-weight="normal" text-anchor="middle"  textLength="37" lengthAdjust="spacingAndGlyphs">13,11 м²</text>
<text x="339" y="344" font-size="8.8" fill="#d8282e" font-weight="bold" text-anchor="middle"  textLength="46" lengthAdjust="spacingAndGlyphs">Детская 2</text>
<line x1="284" y1="362" x2="437" y2="362" stroke="#333" stroke-width="0.7" />
<text x="360" y="360" font-size="7.4" fill="#1a1a1a" font-weight="normal" text-anchor="middle" >387</text>
<line x1="388" y1="260" x2="388" y2="388" stroke="#333" stroke-width="0.7" />
<text font-size="7.4" fill="#1a1a1a" text-anchor="middle" transform="translate(390,326) rotate(90)">312</text>
<line x1="441" y1="266.5" x2="625" y2="266.5" stroke="#333" stroke-width="0.6" />
<path d="M441,264 L469,264 A28,28 0 0 1 441,292" fill="none" stroke="#333" stroke-width="0.6" />
<line x1="441" y1="290" x2="655" y2="290" stroke="#333" stroke-width="0.7" />
<text x="548" y="288" font-size="7.4" fill="#1a1a1a" font-weight="normal" text-anchor="middle" >542</text>
<line x1="510" y1="260" x2="510" y2="297" stroke="#333" stroke-width="0.7" />
<text font-size="7.4" fill="#1a1a1a" text-anchor="middle" transform="translate(512.5,278.5) rotate(90)">100</text>
<line x1="442" y1="339.5" x2="597" y2="339.5" stroke="#333" stroke-width="0.7" />
<text x="518" y="337" font-size="7.4" fill="#1a1a1a" font-weight="normal" text-anchor="middle" >390</text>
<text x="547" y="345.5" font-size="10" fill="#111" font-weight="normal" text-anchor="middle"  textLength="36.3" lengthAdjust="spacingAndGlyphs">11,23 м²</text>
<line x1="442" y1="356" x2="652" y2="356" stroke="#333" stroke-width="0.7" />
<text x="546.8" y="363.5" font-size="7.4" fill="#1a1a1a" font-weight="normal" text-anchor="middle" >531</text>
<line x1="480" y1="301" x2="480" y2="388" stroke="#333" stroke-width="0.7" />
<text font-size="7.4" fill="#1a1a1a" text-anchor="middle" transform="translate(473,345) rotate(90)">215</text>
<line x1="600" y1="363" x2="652" y2="363" stroke="#333" stroke-width="0.7" />
<text x="625" y="369.5" font-size="7.4" fill="#1a1a1a" font-weight="normal" text-anchor="middle" >133</text>
<text x="525.7" y="374" font-size="8.8" fill="#d8282e" font-weight="bold" text-anchor="middle"  textLength="37.6" lengthAdjust="spacingAndGlyphs">Спальня</text>
<line x1="671.3" y1="302" x2="671.3" y2="388" stroke="#333" stroke-width="0.7" />
<text font-size="7.4" fill="#1a1a1a" text-anchor="middle" transform="translate(675,342.5) rotate(-90)">257</text>
<path d="M658,175.3 L743.7,175.3" fill="none" stroke="#1ea0e6" stroke-width="2.6" />
<path d="M685.3,175.3 L685.3,250 Q685,272 679,282 L678.5,292 Q672,308 661.7,324" fill="none" stroke="#1ea0e6" stroke-width="2.3" />
<path d="M692.4,198.3 L743.7,198.3" fill="none" stroke="#3b3fc8" stroke-width="2.6" />
<path d="M692.4,198.3 L692.4,250 Q694,270 693,288 Q690,310 683.3,323 Q680,336 678.5,341 Q670,350 656,350.5 L618,350.5" fill="none" stroke="#3b3fc8" stroke-width="2.8" />
<path d="M618,350.5 L650,350.5" fill="none" stroke="#3b3fc8" stroke-width="4.5" stroke-linecap="round"/>
<path d="M437,274 L462.7,274 L462.7,341" fill="none" stroke="#3b3fc8" stroke-width="3.2" stroke-linejoin="round"/>
<circle cx="658.2" cy="174.8" r="2.2" fill="#f5ec20"/>
<ellipse cx="743.5" cy="178" rx="2.6" ry="6" fill="#2aa04a"/>
<line x1="743.7" y1="178.6" x2="768" y2="178.6" stroke="#2aa04a" stroke-width="2.4" />
<ellipse cx="743.3" cy="197" rx="2.4" ry="5" fill="#3b3fc8"/>
<ellipse cx="775" cy="177" rx="2.6" ry="5.5" fill="#3b3fc8"/>
<rect x="436.5" y="271" width="3.5" height="7" fill="#f5ec20" stroke="none" stroke-width="1" />
<rect x="624.5" y="347.5" width="11.5" height="6.8" fill="none" stroke="#f2e21a" stroke-width="1.6" />
<circle cx="662.5" cy="330.5" r="5.6" fill="none" stroke="#f2e21a" stroke-width="1.9"/>
<circle cx="208.5" cy="163.2" r="19.5" fill="none" stroke="#444" stroke-width="0.6"/>
<polygon points="208.3,143.5 201.6,182.3 208.3,176.8 215,182.3" fill="none" stroke="#111" stroke-width="1.3" stroke-linejoin="miter"/>
<circle cx="208.3" cy="163.2" r="0.7" fill="#111"/>
<text x="208.3" y="141.8" font-size="9" fill="#111" font-weight="bold" text-anchor="middle" >N</text>
<line x1="228" y1="163.2" x2="231" y2="163.2" stroke="#333" stroke-width="0.6" />
<text x="382.3" y="127.5" font-size="7.5" fill="#222" font-weight="normal" text-anchor="middle"  textLength="31.4" lengthAdjust="spacingAndGlyphs">Вариант 1</text>
<ellipse cx="554" cy="409" rx="3.3" ry="8.5" fill="#fff" stroke="#222" stroke-width="0.7"/>
<circle cx="554" cy="409" r="2.3" fill="#fff" stroke="#222" stroke-width="0.7"/>
<line x1="541" y1="399" x2="552" y2="407" stroke="#222" stroke-width="0.7" />
<line x1="539" y1="417" x2="552" y2="411" stroke="#222" stroke-width="0.7" />
</g>
<rect x="187" y="85" width="792" height="9" fill="#ececec" stroke="none" stroke-width="1" />
<rect x="187" y="85" width="9" height="427" fill="#ececec" stroke="none" stroke-width="1" />
<line x1="196" y1="94" x2="978" y2="94" stroke="#666" stroke-width="0.8" />
<line x1="196" y1="94" x2="196" y2="512" stroke="#666" stroke-width="0.8" />
<line x1="199.8" y1="92" x2="199.8" y2="94" stroke="#555" stroke-width="0.6" />
<line x1="207.75" y1="85" x2="207.75" y2="94" stroke="#444" stroke-width="1.2" />
<text x="209.55" y="91.2" font-size="6.3" fill="#222" font-weight="normal" text-anchor="start" >-1</text>
<line x1="215.7" y1="92" x2="215.7" y2="94" stroke="#555" stroke-width="0.6" />
<line x1="223.65" y1="92" x2="223.65" y2="94" stroke="#555" stroke-width="0.6" />
<line x1="231.6" y1="92" x2="231.6" y2="94" stroke="#555" stroke-width="0.6" />
<line x1="239.55" y1="92" x2="239.55" y2="94" stroke="#555" stroke-width="0.6" />
<line x1="247.5" y1="85" x2="247.5" y2="94" stroke="#444" stroke-width="1.2" />
<text x="249.3" y="91.2" font-size="6.3" fill="#222" font-weight="normal" text-anchor="start" >0м</text>
<line x1="255.45" y1="92" x2="255.45" y2="94" stroke="#555" stroke-width="0.6" />
<line x1="263.4" y1="92" x2="263.4" y2="94" stroke="#555" stroke-width="0.6" />
<line x1="271.35" y1="92" x2="271.35" y2="94" stroke="#555" stroke-width="0.6" />
<line x1="279.3" y1="92" x2="279.3" y2="94" stroke="#555" stroke-width="0.6" />
<line x1="287.25" y1="85" x2="287.25" y2="94" stroke="#444" stroke-width="1.2" />
<text x="289.05" y="91.2" font-size="6.3" fill="#222" font-weight="normal" text-anchor="start" >1</text>
<line x1="295.2" y1="92" x2="295.2" y2="94" stroke="#555" stroke-width="0.6" />
<line x1="303.15" y1="92" x2="303.15" y2="94" stroke="#555" stroke-width="0.6" />
<line x1="311.1" y1="92" x2="311.1" y2="94" stroke="#555" stroke-width="0.6" />
<line x1="319.05" y1="92" x2="319.05" y2="94" stroke="#555" stroke-width="0.6" />
<line x1="327.0" y1="85" x2="327.0" y2="94" stroke="#444" stroke-width="1.2" />
<text x="328.8" y="91.2" font-size="6.3" fill="#222" font-weight="normal" text-anchor="start" >2</text>
<line x1="334.95" y1="92" x2="334.95" y2="94" stroke="#555" stroke-width="0.6" />
<line x1="342.9" y1="92" x2="342.9" y2="94" stroke="#555" stroke-width="0.6" />
<line x1="350.85" y1="92" x2="350.85" y2="94" stroke="#555" stroke-width="0.6" />
<line x1="358.8" y1="92" x2="358.8" y2="94" stroke="#555" stroke-width="0.6" />
<line x1="366.75" y1="85" x2="366.75" y2="94" stroke="#444" stroke-width="1.2" />
<text x="368.55" y="91.2" font-size="6.3" fill="#222" font-weight="normal" text-anchor="start" >3</text>
<line x1="374.7" y1="92" x2="374.7" y2="94" stroke="#555" stroke-width="0.6" />
<line x1="382.65" y1="92" x2="382.65" y2="94" stroke="#555" stroke-width="0.6" />
<line x1="390.6" y1="92" x2="390.6" y2="94" stroke="#555" stroke-width="0.6" />
<line x1="398.55" y1="92" x2="398.55" y2="94" stroke="#555" stroke-width="0.6" />
<line x1="406.5" y1="85" x2="406.5" y2="94" stroke="#444" stroke-width="1.2" />
<text x="408.3" y="91.2" font-size="6.3" fill="#222" font-weight="normal" text-anchor="start" >4</text>
<line x1="414.45" y1="92" x2="414.45" y2="94" stroke="#555" stroke-width="0.6" />
<line x1="422.4" y1="92" x2="422.4" y2="94" stroke="#555" stroke-width="0.6" />
<line x1="430.35" y1="92" x2="430.35" y2="94" stroke="#555" stroke-width="0.6" />
<line x1="438.3" y1="92" x2="438.3" y2="94" stroke="#555" stroke-width="0.6" />
<line x1="446.25" y1="85" x2="446.25" y2="94" stroke="#444" stroke-width="1.2" />
<text x="448.05" y="91.2" font-size="6.3" fill="#222" font-weight="normal" text-anchor="start" >5</text>
<line x1="454.2" y1="92" x2="454.2" y2="94" stroke="#555" stroke-width="0.6" />
<line x1="462.15" y1="92" x2="462.15" y2="94" stroke="#555" stroke-width="0.6" />
<line x1="470.1" y1="92" x2="470.1" y2="94" stroke="#555" stroke-width="0.6" />
<line x1="478.05" y1="92" x2="478.05" y2="94" stroke="#555" stroke-width="0.6" />
<line x1="486.0" y1="85" x2="486.0" y2="94" stroke="#444" stroke-width="1.2" />
<text x="487.8" y="91.2" font-size="6.3" fill="#222" font-weight="normal" text-anchor="start" >6</text>
<line x1="493.95" y1="92" x2="493.95" y2="94" stroke="#555" stroke-width="0.6" />
<line x1="501.9" y1="92" x2="501.9" y2="94" stroke="#555" stroke-width="0.6" />
<line x1="509.85" y1="92" x2="509.85" y2="94" stroke="#555" stroke-width="0.6" />
<line x1="517.8" y1="92" x2="517.8" y2="94" stroke="#555" stroke-width="0.6" />
<line x1="525.75" y1="85" x2="525.75" y2="94" stroke="#444" stroke-width="1.2" />
<text x="527.55" y="91.2" font-size="6.3" fill="#222" font-weight="normal" text-anchor="start" >7</text>
<line x1="533.7" y1="92" x2="533.7" y2="94" stroke="#555" stroke-width="0.6" />
<line x1="541.65" y1="92" x2="541.65" y2="94" stroke="#555" stroke-width="0.6" />
<line x1="549.6" y1="92" x2="549.6" y2="94" stroke="#555" stroke-width="0.6" />
<line x1="557.55" y1="92" x2="557.55" y2="94" stroke="#555" stroke-width="0.6" />
<line x1="565.5" y1="85" x2="565.5" y2="94" stroke="#444" stroke-width="1.2" />
<text x="567.3" y="91.2" font-size="6.3" fill="#222" font-weight="normal" text-anchor="start" >8</text>
<line x1="573.45" y1="92" x2="573.45" y2="94" stroke="#555" stroke-width="0.6" />
<line x1="581.4" y1="92" x2="581.4" y2="94" stroke="#555" stroke-width="0.6" />
<line x1="589.35" y1="92" x2="589.35" y2="94" stroke="#555" stroke-width="0.6" />
<line x1="597.3" y1="92" x2="597.3" y2="94" stroke="#555" stroke-width="0.6" />
<line x1="605.25" y1="85" x2="605.25" y2="94" stroke="#444" stroke-width="1.2" />
<text x="607.05" y="91.2" font-size="6.3" fill="#222" font-weight="normal" text-anchor="start" >9</text>
<line x1="613.2" y1="92" x2="613.2" y2="94" stroke="#555" stroke-width="0.6" />
<line x1="621.15" y1="92" x2="621.15" y2="94" stroke="#555" stroke-width="0.6" />
<line x1="629.1" y1="92" x2="629.1" y2="94" stroke="#555" stroke-width="0.6" />
<line x1="637.05" y1="92" x2="637.05" y2="94" stroke="#555" stroke-width="0.6" />
<line x1="645.0" y1="85" x2="645.0" y2="94" stroke="#444" stroke-width="1.2" />
<text x="646.8" y="91.2" font-size="6.3" fill="#222" font-weight="normal" text-anchor="start" >10</text>
<line x1="652.95" y1="92" x2="652.95" y2="94" stroke="#555" stroke-width="0.6" />
<line x1="660.9" y1="92" x2="660.9" y2="94" stroke="#555" stroke-width="0.6" />
<line x1="668.85" y1="92" x2="668.85" y2="94" stroke="#555" stroke-width="0.6" />
<line x1="676.8" y1="92" x2="676.8" y2="94" stroke="#555" stroke-width="0.6" />
<line x1="684.75" y1="85" x2="684.75" y2="94" stroke="#444" stroke-width="1.2" />
<text x="686.55" y="91.2" font-size="6.3" fill="#222" font-weight="normal" text-anchor="start" >11</text>
<line x1="692.7" y1="92" x2="692.7" y2="94" stroke="#555" stroke-width="0.6" />
<line x1="700.65" y1="92" x2="700.65" y2="94" stroke="#555" stroke-width="0.6" />
<line x1="708.6" y1="92" x2="708.6" y2="94" stroke="#555" stroke-width="0.6" />
<line x1="716.55" y1="92" x2="716.55" y2="94" stroke="#555" stroke-width="0.6" />
<line x1="724.5" y1="85" x2="724.5" y2="94" stroke="#444" stroke-width="1.2" />
<text x="726.3" y="91.2" font-size="6.3" fill="#222" font-weight="normal" text-anchor="start" >12</text>
<line x1="732.45" y1="92" x2="732.45" y2="94" stroke="#555" stroke-width="0.6" />
<line x1="740.4" y1="92" x2="740.4" y2="94" stroke="#555" stroke-width="0.6" />
<line x1="748.35" y1="92" x2="748.35" y2="94" stroke="#555" stroke-width="0.6" />
<line x1="756.3" y1="92" x2="756.3" y2="94" stroke="#555" stroke-width="0.6" />
<line x1="764.25" y1="85" x2="764.25" y2="94" stroke="#444" stroke-width="1.2" />
<text x="766.05" y="91.2" font-size="6.3" fill="#222" font-weight="normal" text-anchor="start" >13</text>
<line x1="772.2" y1="92" x2="772.2" y2="94" stroke="#555" stroke-width="0.6" />
<line x1="780.15" y1="92" x2="780.15" y2="94" stroke="#555" stroke-width="0.6" />
<line x1="788.1" y1="92" x2="788.1" y2="94" stroke="#555" stroke-width="0.6" />
<line x1="796.05" y1="92" x2="796.05" y2="94" stroke="#555" stroke-width="0.6" />
<line x1="804.0" y1="85" x2="804.0" y2="94" stroke="#444" stroke-width="1.2" />
<text x="805.8" y="91.2" font-size="6.3" fill="#222" font-weight="normal" text-anchor="start" >14</text>
<line x1="811.95" y1="92" x2="811.95" y2="94" stroke="#555" stroke-width="0.6" />
<line x1="819.9" y1="92" x2="819.9" y2="94" stroke="#555" stroke-width="0.6" />
<line x1="827.85" y1="92" x2="827.85" y2="94" stroke="#555" stroke-width="0.6" />
<line x1="835.8" y1="92" x2="835.8" y2="94" stroke="#555" stroke-width="0.6" />
<line x1="843.75" y1="85" x2="843.75" y2="94" stroke="#444" stroke-width="1.2" />
<text x="845.55" y="91.2" font-size="6.3" fill="#222" font-weight="normal" text-anchor="start" >15</text>
<line x1="851.7" y1="92" x2="851.7" y2="94" stroke="#555" stroke-width="0.6" />
<line x1="859.65" y1="92" x2="859.65" y2="94" stroke="#555" stroke-width="0.6" />
<line x1="867.6" y1="92" x2="867.6" y2="94" stroke="#555" stroke-width="0.6" />
<line x1="875.55" y1="92" x2="875.55" y2="94" stroke="#555" stroke-width="0.6" />
<line x1="883.5" y1="85" x2="883.5" y2="94" stroke="#444" stroke-width="1.2" />
<text x="885.3" y="91.2" font-size="6.3" fill="#222" font-weight="normal" text-anchor="start" >16</text>
<line x1="891.45" y1="92" x2="891.45" y2="94" stroke="#555" stroke-width="0.6" />
<line x1="899.4" y1="92" x2="899.4" y2="94" stroke="#555" stroke-width="0.6" />
<line x1="907.35" y1="92" x2="907.35" y2="94" stroke="#555" stroke-width="0.6" />
<line x1="915.3" y1="92" x2="915.3" y2="94" stroke="#555" stroke-width="0.6" />
<line x1="923.25" y1="85" x2="923.25" y2="94" stroke="#444" stroke-width="1.2" />
<text x="925.05" y="91.2" font-size="6.3" fill="#222" font-weight="normal" text-anchor="start" >17</text>
<line x1="931.2" y1="92" x2="931.2" y2="94" stroke="#555" stroke-width="0.6" />
<line x1="939.15" y1="92" x2="939.15" y2="94" stroke="#555" stroke-width="0.6" />
<line x1="947.1" y1="92" x2="947.1" y2="94" stroke="#555" stroke-width="0.6" />
<line x1="955.05" y1="92" x2="955.05" y2="94" stroke="#555" stroke-width="0.6" />
<line x1="963.0" y1="85" x2="963.0" y2="94" stroke="#444" stroke-width="1.2" />
<text x="964.8" y="91.2" font-size="6.3" fill="#222" font-weight="normal" text-anchor="start" >18</text>
<line x1="970.95" y1="92" x2="970.95" y2="94" stroke="#555" stroke-width="0.6" />
<line x1="194" y1="95.7" x2="196" y2="95.7" stroke="#555" stroke-width="0.6" />
<line x1="187" y1="103.65" x2="196" y2="103.65" stroke="#444" stroke-width="1.2" />
<text x="0" y="0" font-size="6.3" fill="#222" text-anchor="end" transform="translate(194.3,105.65) rotate(-90)">-1</text>
<line x1="194" y1="111.60000000000001" x2="196" y2="111.60000000000001" stroke="#555" stroke-width="0.6" />
<line x1="194" y1="119.55000000000001" x2="196" y2="119.55000000000001" stroke="#555" stroke-width="0.6" />
<line x1="194" y1="127.5" x2="196" y2="127.5" stroke="#555" stroke-width="0.6" />
<line x1="194" y1="135.45000000000002" x2="196" y2="135.45000000000002" stroke="#555" stroke-width="0.6" />
<line x1="187" y1="143.4" x2="196" y2="143.4" stroke="#444" stroke-width="1.2" />
<text x="0" y="0" font-size="6.3" fill="#222" text-anchor="end" transform="translate(194.3,145.4) rotate(-90)">0м</text>
<line x1="194" y1="151.35" x2="196" y2="151.35" stroke="#555" stroke-width="0.6" />
<line x1="194" y1="159.3" x2="196" y2="159.3" stroke="#555" stroke-width="0.6" />
<line x1="194" y1="167.25" x2="196" y2="167.25" stroke="#555" stroke-width="0.6" />
<line x1="194" y1="175.20000000000002" x2="196" y2="175.20000000000002" stroke="#555" stroke-width="0.6" />
<line x1="187" y1="183.15" x2="196" y2="183.15" stroke="#444" stroke-width="1.2" />
<text x="0" y="0" font-size="6.3" fill="#222" text-anchor="end" transform="translate(194.3,185.15) rotate(-90)">1</text>
<line x1="194" y1="191.1" x2="196" y2="191.1" stroke="#555" stroke-width="0.6" />
<line x1="194" y1="199.05" x2="196" y2="199.05" stroke="#555" stroke-width="0.6" />
<line x1="194" y1="207.0" x2="196" y2="207.0" stroke="#555" stroke-width="0.6" />
<line x1="194" y1="214.95000000000002" x2="196" y2="214.95000000000002" stroke="#555" stroke-width="0.6" />
<line x1="187" y1="222.9" x2="196" y2="222.9" stroke="#444" stroke-width="1.2" />
<text x="0" y="0" font-size="6.3" fill="#222" text-anchor="end" transform="translate(194.3,224.9) rotate(-90)">2</text>
<line x1="194" y1="230.85" x2="196" y2="230.85" stroke="#555" stroke-width="0.6" />
<line x1="194" y1="238.8" x2="196" y2="238.8" stroke="#555" stroke-width="0.6" />
<line x1="194" y1="246.75" x2="196" y2="246.75" stroke="#555" stroke-width="0.6" />
<line x1="194" y1="254.70000000000002" x2="196" y2="254.70000000000002" stroke="#555" stroke-width="0.6" />
<line x1="187" y1="262.65" x2="196" y2="262.65" stroke="#444" stroke-width="1.2" />
<text x="0" y="0" font-size="6.3" fill="#222" text-anchor="end" transform="translate(194.3,264.65) rotate(-90)">3</text>
<line x1="194" y1="270.59999999999997" x2="196" y2="270.59999999999997" stroke="#555" stroke-width="0.6" />
<line x1="194" y1="278.54999999999995" x2="196" y2="278.54999999999995" stroke="#555" stroke-width="0.6" />
<line x1="194" y1="286.5" x2="196" y2="286.5" stroke="#555" stroke-width="0.6" />
<line x1="194" y1="294.45" x2="196" y2="294.45" stroke="#555" stroke-width="0.6" />
<line x1="187" y1="302.4" x2="196" y2="302.4" stroke="#444" stroke-width="1.2" />
<text x="0" y="0" font-size="6.3" fill="#222" text-anchor="end" transform="translate(194.3,304.4) rotate(-90)">4</text>
<line x1="194" y1="310.34999999999997" x2="196" y2="310.34999999999997" stroke="#555" stroke-width="0.6" />
<line x1="194" y1="318.29999999999995" x2="196" y2="318.29999999999995" stroke="#555" stroke-width="0.6" />
<line x1="194" y1="326.25" x2="196" y2="326.25" stroke="#555" stroke-width="0.6" />
<line x1="194" y1="334.2" x2="196" y2="334.2" stroke="#555" stroke-width="0.6" />
<line x1="187" y1="342.15" x2="196" y2="342.15" stroke="#444" stroke-width="1.2" />
<text x="0" y="0" font-size="6.3" fill="#222" text-anchor="end" transform="translate(194.3,344.15) rotate(-90)">5</text>
<line x1="194" y1="350.09999999999997" x2="196" y2="350.09999999999997" stroke="#555" stroke-width="0.6" />
<line x1="194" y1="358.04999999999995" x2="196" y2="358.04999999999995" stroke="#555" stroke-width="0.6" />
<line x1="194" y1="366.0" x2="196" y2="366.0" stroke="#555" stroke-width="0.6" />
<line x1="194" y1="373.95" x2="196" y2="373.95" stroke="#555" stroke-width="0.6" />
<line x1="187" y1="381.9" x2="196" y2="381.9" stroke="#444" stroke-width="1.2" />
<text x="0" y="0" font-size="6.3" fill="#222" text-anchor="end" transform="translate(194.3,383.9) rotate(-90)">6</text>
<line x1="194" y1="389.84999999999997" x2="196" y2="389.84999999999997" stroke="#555" stroke-width="0.6" />
<line x1="194" y1="397.79999999999995" x2="196" y2="397.79999999999995" stroke="#555" stroke-width="0.6" />
<line x1="194" y1="405.75" x2="196" y2="405.75" stroke="#555" stroke-width="0.6" />
<line x1="194" y1="413.7" x2="196" y2="413.7" stroke="#555" stroke-width="0.6" />
<line x1="187" y1="421.65" x2="196" y2="421.65" stroke="#444" stroke-width="1.2" />
<text x="0" y="0" font-size="6.3" fill="#222" text-anchor="end" transform="translate(194.3,423.65) rotate(-90)">7</text>
<line x1="194" y1="429.59999999999997" x2="196" y2="429.59999999999997" stroke="#555" stroke-width="0.6" />
<line x1="194" y1="437.54999999999995" x2="196" y2="437.54999999999995" stroke="#555" stroke-width="0.6" />
<line x1="194" y1="445.5" x2="196" y2="445.5" stroke="#555" stroke-width="0.6" />
<line x1="194" y1="453.45" x2="196" y2="453.45" stroke="#555" stroke-width="0.6" />
<line x1="187" y1="461.4" x2="196" y2="461.4" stroke="#444" stroke-width="1.2" />
<text x="0" y="0" font-size="6.3" fill="#222" text-anchor="end" transform="translate(194.3,463.4) rotate(-90)">8</text>
<line x1="194" y1="469.34999999999997" x2="196" y2="469.34999999999997" stroke="#555" stroke-width="0.6" />
<line x1="194" y1="477.29999999999995" x2="196" y2="477.29999999999995" stroke="#555" stroke-width="0.6" />
<line x1="194" y1="485.25" x2="196" y2="485.25" stroke="#555" stroke-width="0.6" />
<line x1="194" y1="493.2" x2="196" y2="493.2" stroke="#555" stroke-width="0.6" />
<line x1="187" y1="501.15" x2="196" y2="501.15" stroke="#444" stroke-width="1.2" />
<text x="0" y="0" font-size="6.3" fill="#222" text-anchor="end" transform="translate(194.3,503.15) rotate(-90)">9</text>
<line x1="194" y1="509.09999999999997" x2="196" y2="509.09999999999997" stroke="#555" stroke-width="0.6" />
<circle cx="192" cy="90" r="2.6" fill="#f0d030"/>
<rect x="189" y="86.5" width="3" height="3" fill="none" stroke="#777" stroke-width="0.5" />
<rect x="979" y="94" width="9" height="418" fill="#f0f0f0" stroke="none" stroke-width="1" />
<rect x="979.5" y="105.5" width="8" height="358" fill="#cdcdcd" stroke="none" stroke-width="1" />
<path d="M981,101 L983.5,98.5 L986,101" fill="none" stroke="#444" stroke-width="0.8" />
<path d="M981,506 L983.5,508.5 L986,506" fill="none" stroke="#444" stroke-width="0.8" />
<rect x="196" y="512" width="792" height="9" fill="#f0f0f0" stroke="none" stroke-width="1" />
<rect x="235" y="512.5" width="735" height="7.5" fill="#cdcdcd" stroke="none" stroke-width="1" />
<path d="M203,514 L200.5,516.3 L203,518.6" fill="none" stroke="#444" stroke-width="0.8" />
<path d="M973.5,514 L976,516.3 L973.5,518.6" fill="none" stroke="#444" stroke-width="0.8" />
<rect x="979" y="512" width="9" height="9" fill="#f0f0f0" stroke="none" stroke-width="1" />
<path d="M185.5,86 L183.8,88 L185.5,90 Z M185.5,91.5 L183.8,93.5 L185.5,95.5 Z" fill="#222" stroke="none" stroke-width="1" />
<path d="M188,523.2 L190,521.5 L192,523.2 Z M193,521.5 L195,523.2 L197,521.5 Z" fill="#222" stroke="none" stroke-width="1" />
<rect x="186.9" y="84.9" width="801.2" height="436.2" fill="none" stroke="#3a7aac" stroke-width="1.8" />
<rect x="188.3" y="86.3" width="798.4" height="433.4" fill="none" stroke="#cfe3f5" stroke-width="0.7" />
</svg>
</body></html>
